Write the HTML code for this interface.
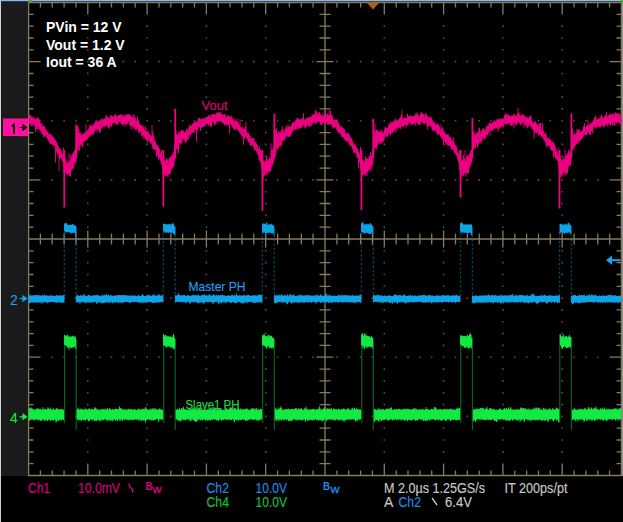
<!DOCTYPE html>
<html><head><meta charset="utf-8"><style>
html,body{margin:0;padding:0;background:#000;width:623px;height:522px;overflow:hidden}
svg{display:block}
text{font-family:"Liberation Sans",sans-serif}
</style></head><body>
<svg width="623" height="522" viewBox="0 0 623 522">
<rect width="623" height="522" fill="#000"/>
<rect x="0" y="0" width="27" height="476" fill="#1a1a1a"/>
<rect x="0" y="0" width="1" height="522" fill="#d2d2d2"/>
<rect x="0" y="0" width="623" height="1" fill="#a0b4cc"/>
<rect x="1" y="1" width="622" height="1" fill="#1a4070"/>
<rect x="622" y="2" width="1" height="474" fill="#9a9a9a"/>
<rect x="29" y="0" width="3" height="2" fill="#30c040"/>
<rect x="621" y="0" width="2" height="3" fill="#30c040"/>
<rect x="28.5" y="2.5" width="593" height="473" fill="none" stroke="#857b5f" stroke-width="1.5"/>
<path d="M40.4 2.5v5M40.4 475.5v-5M52.2 2.5v5M52.2 475.5v-5M64.1 2.5v5M64.1 475.5v-5M75.9 2.5v5M75.9 475.5v-5M87.8 2.5v12M87.8 475.5v-12M99.7 2.5v5M99.7 475.5v-5M111.5 2.5v5M111.5 475.5v-5M123.4 2.5v5M123.4 475.5v-5M135.2 2.5v5M135.2 475.5v-5M147.1 2.5v12M147.1 475.5v-12M159 2.5v5M159 475.5v-5M170.8 2.5v5M170.8 475.5v-5M182.7 2.5v5M182.7 475.5v-5M194.5 2.5v5M194.5 475.5v-5M206.4 2.5v12M206.4 475.5v-12M218.3 2.5v5M218.3 475.5v-5M230.1 2.5v5M230.1 475.5v-5M242 2.5v5M242 475.5v-5M253.8 2.5v5M253.8 475.5v-5M265.7 2.5v12M265.7 475.5v-12M277.6 2.5v5M277.6 475.5v-5M289.4 2.5v5M289.4 475.5v-5M301.3 2.5v5M301.3 475.5v-5M313.1 2.5v5M313.1 475.5v-5M325 2.5v12M325 475.5v-12M336.9 2.5v5M336.9 475.5v-5M348.7 2.5v5M348.7 475.5v-5M360.6 2.5v5M360.6 475.5v-5M372.4 2.5v5M372.4 475.5v-5M384.3 2.5v12M384.3 475.5v-12M396.2 2.5v5M396.2 475.5v-5M408 2.5v5M408 475.5v-5M419.9 2.5v5M419.9 475.5v-5M431.7 2.5v5M431.7 475.5v-5M443.6 2.5v12M443.6 475.5v-12M455.5 2.5v5M455.5 475.5v-5M467.3 2.5v5M467.3 475.5v-5M479.2 2.5v5M479.2 475.5v-5M491 2.5v5M491 475.5v-5M502.9 2.5v12M502.9 475.5v-12M514.8 2.5v5M514.8 475.5v-5M526.6 2.5v5M526.6 475.5v-5M538.5 2.5v5M538.5 475.5v-5M550.3 2.5v5M550.3 475.5v-5M562.2 2.5v12M562.2 475.5v-12M574.1 2.5v5M574.1 475.5v-5M585.9 2.5v5M585.9 475.5v-5M597.8 2.5v5M597.8 475.5v-5M609.6 2.5v5M609.6 475.5v-5M28.5 14.3h5M621.5 14.3h-5M28.5 26.1h5M621.5 26.1h-5M28.5 38h5M621.5 38h-5M28.5 49.8h5M621.5 49.8h-5M28.5 61.6h12M621.5 61.6h-12M28.5 73.5h5M621.5 73.5h-5M28.5 85.3h5M621.5 85.3h-5M28.5 97.1h5M621.5 97.1h-5M28.5 108.9h5M621.5 108.9h-5M28.5 120.8h12M621.5 120.8h-12M28.5 132.6h5M621.5 132.6h-5M28.5 144.4h5M621.5 144.4h-5M28.5 156.2h5M621.5 156.2h-5M28.5 168.1h5M621.5 168.1h-5M28.5 179.9h12M621.5 179.9h-12M28.5 191.7h5M621.5 191.7h-5M28.5 203.5h5M621.5 203.5h-5M28.5 215.3h5M621.5 215.3h-5M28.5 227.2h5M621.5 227.2h-5M28.5 239h12M621.5 239h-12M28.5 250.8h5M621.5 250.8h-5M28.5 262.6h5M621.5 262.6h-5M28.5 274.5h5M621.5 274.5h-5M28.5 286.3h5M621.5 286.3h-5M28.5 298.1h12M621.5 298.1h-12M28.5 309.9h5M621.5 309.9h-5M28.5 321.8h5M621.5 321.8h-5M28.5 333.6h5M621.5 333.6h-5M28.5 345.4h5M621.5 345.4h-5M28.5 357.2h12M621.5 357.2h-12M28.5 369.1h5M621.5 369.1h-5M28.5 380.9h5M621.5 380.9h-5M28.5 392.7h5M621.5 392.7h-5M28.5 404.6h5M621.5 404.6h-5M28.5 416.4h12M621.5 416.4h-12M28.5 428.2h5M621.5 428.2h-5M28.5 440h5M621.5 440h-5M28.5 451.9h5M621.5 451.9h-5M28.5 463.7h5M621.5 463.7h-5M28.5 239H621.5M325 2.5V475.5M40.4 233.5v11M52.2 233.5v11M64.1 233.5v11M75.9 233.5v11M87.8 230.5v17M99.7 233.5v11M111.5 233.5v11M123.4 233.5v11M135.2 233.5v11M147.1 230.5v17M159 233.5v11M170.8 233.5v11M182.7 233.5v11M194.5 233.5v11M206.4 230.5v17M218.3 233.5v11M230.1 233.5v11M242 233.5v11M253.8 233.5v11M265.7 230.5v17M277.6 233.5v11M289.4 233.5v11M301.3 233.5v11M313.1 233.5v11M325 230.5v17M336.9 233.5v11M348.7 233.5v11M360.6 233.5v11M372.4 233.5v11M384.3 230.5v17M396.2 233.5v11M408 233.5v11M419.9 233.5v11M431.7 233.5v11M443.6 230.5v17M455.5 233.5v11M467.3 233.5v11M479.2 233.5v11M491 233.5v11M502.9 230.5v17M514.8 233.5v11M526.6 233.5v11M538.5 233.5v11M550.3 233.5v11M562.2 230.5v17M574.1 233.5v11M585.9 233.5v11M597.8 233.5v11M609.6 233.5v11M319.5 14.3h11M319.5 26.1h11M319.5 38h11M319.5 49.8h11M316.5 61.6h17M319.5 73.5h11M319.5 85.3h11M319.5 97.1h11M319.5 108.9h11M316.5 120.8h17M319.5 132.6h11M319.5 144.4h11M319.5 156.2h11M319.5 168.1h11M316.5 179.9h17M319.5 191.7h11M319.5 203.5h11M319.5 215.3h11M319.5 227.2h11M316.5 239h17M319.5 250.8h11M319.5 262.6h11M319.5 274.5h11M319.5 286.3h11M316.5 298.1h17M319.5 309.9h11M319.5 321.8h11M319.5 333.6h11M319.5 345.4h11M316.5 357.2h17M319.5 369.1h11M319.5 380.9h11M319.5 392.7h11M319.5 404.6h11M316.5 416.4h17M319.5 428.2h11M319.5 440h11M319.5 451.9h11M319.5 463.7h11" stroke="#857b5f" stroke-width="1.3" fill="none"/>
<path d="M87 26.1h1.6M87 38h1.6M87 49.8h1.6M87 61.6h1.6M87 73.5h1.6M87 85.3h1.6M87 97.1h1.6M87 108.9h1.6M87 120.8h1.6M87 132.6h1.6M87 144.4h1.6M87 156.2h1.6M87 168.1h1.6M87 179.9h1.6M87 191.7h1.6M87 203.5h1.6M87 215.3h1.6M87 227.2h1.6M87 239h1.6M87 250.8h1.6M87 262.6h1.6M87 274.5h1.6M87 286.3h1.6M87 298.1h1.6M87 309.9h1.6M87 321.8h1.6M87 333.6h1.6M87 345.4h1.6M87 357.2h1.6M87 369.1h1.6M87 380.9h1.6M87 392.7h1.6M87 404.6h1.6M87 416.4h1.6M87 428.2h1.6M87 440h1.6M87 451.9h1.6M146.3 26.1h1.6M146.3 38h1.6M146.3 49.8h1.6M146.3 61.6h1.6M146.3 73.5h1.6M146.3 85.3h1.6M146.3 97.1h1.6M146.3 108.9h1.6M146.3 120.8h1.6M146.3 132.6h1.6M146.3 144.4h1.6M146.3 156.2h1.6M146.3 168.1h1.6M146.3 179.9h1.6M146.3 191.7h1.6M146.3 203.5h1.6M146.3 215.3h1.6M146.3 227.2h1.6M146.3 239h1.6M146.3 250.8h1.6M146.3 262.6h1.6M146.3 274.5h1.6M146.3 286.3h1.6M146.3 298.1h1.6M146.3 309.9h1.6M146.3 321.8h1.6M146.3 333.6h1.6M146.3 345.4h1.6M146.3 357.2h1.6M146.3 369.1h1.6M146.3 380.9h1.6M146.3 392.7h1.6M146.3 404.6h1.6M146.3 416.4h1.6M146.3 428.2h1.6M146.3 440h1.6M146.3 451.9h1.6M205.6 26.1h1.6M205.6 38h1.6M205.6 49.8h1.6M205.6 61.6h1.6M205.6 73.5h1.6M205.6 85.3h1.6M205.6 97.1h1.6M205.6 108.9h1.6M205.6 120.8h1.6M205.6 132.6h1.6M205.6 144.4h1.6M205.6 156.2h1.6M205.6 168.1h1.6M205.6 179.9h1.6M205.6 191.7h1.6M205.6 203.5h1.6M205.6 215.3h1.6M205.6 227.2h1.6M205.6 239h1.6M205.6 250.8h1.6M205.6 262.6h1.6M205.6 274.5h1.6M205.6 286.3h1.6M205.6 298.1h1.6M205.6 309.9h1.6M205.6 321.8h1.6M205.6 333.6h1.6M205.6 345.4h1.6M205.6 357.2h1.6M205.6 369.1h1.6M205.6 380.9h1.6M205.6 392.7h1.6M205.6 404.6h1.6M205.6 416.4h1.6M205.6 428.2h1.6M205.6 440h1.6M205.6 451.9h1.6M264.9 26.1h1.6M264.9 38h1.6M264.9 49.8h1.6M264.9 61.6h1.6M264.9 73.5h1.6M264.9 85.3h1.6M264.9 97.1h1.6M264.9 108.9h1.6M264.9 120.8h1.6M264.9 132.6h1.6M264.9 144.4h1.6M264.9 156.2h1.6M264.9 168.1h1.6M264.9 179.9h1.6M264.9 191.7h1.6M264.9 203.5h1.6M264.9 215.3h1.6M264.9 227.2h1.6M264.9 239h1.6M264.9 250.8h1.6M264.9 262.6h1.6M264.9 274.5h1.6M264.9 286.3h1.6M264.9 298.1h1.6M264.9 309.9h1.6M264.9 321.8h1.6M264.9 333.6h1.6M264.9 345.4h1.6M264.9 357.2h1.6M264.9 369.1h1.6M264.9 380.9h1.6M264.9 392.7h1.6M264.9 404.6h1.6M264.9 416.4h1.6M264.9 428.2h1.6M264.9 440h1.6M264.9 451.9h1.6M383.5 26.1h1.6M383.5 38h1.6M383.5 49.8h1.6M383.5 61.6h1.6M383.5 73.5h1.6M383.5 85.3h1.6M383.5 97.1h1.6M383.5 108.9h1.6M383.5 120.8h1.6M383.5 132.6h1.6M383.5 144.4h1.6M383.5 156.2h1.6M383.5 168.1h1.6M383.5 179.9h1.6M383.5 191.7h1.6M383.5 203.5h1.6M383.5 215.3h1.6M383.5 227.2h1.6M383.5 239h1.6M383.5 250.8h1.6M383.5 262.6h1.6M383.5 274.5h1.6M383.5 286.3h1.6M383.5 298.1h1.6M383.5 309.9h1.6M383.5 321.8h1.6M383.5 333.6h1.6M383.5 345.4h1.6M383.5 357.2h1.6M383.5 369.1h1.6M383.5 380.9h1.6M383.5 392.7h1.6M383.5 404.6h1.6M383.5 416.4h1.6M383.5 428.2h1.6M383.5 440h1.6M383.5 451.9h1.6M442.8 26.1h1.6M442.8 38h1.6M442.8 49.8h1.6M442.8 61.6h1.6M442.8 73.5h1.6M442.8 85.3h1.6M442.8 97.1h1.6M442.8 108.9h1.6M442.8 120.8h1.6M442.8 132.6h1.6M442.8 144.4h1.6M442.8 156.2h1.6M442.8 168.1h1.6M442.8 179.9h1.6M442.8 191.7h1.6M442.8 203.5h1.6M442.8 215.3h1.6M442.8 227.2h1.6M442.8 239h1.6M442.8 250.8h1.6M442.8 262.6h1.6M442.8 274.5h1.6M442.8 286.3h1.6M442.8 298.1h1.6M442.8 309.9h1.6M442.8 321.8h1.6M442.8 333.6h1.6M442.8 345.4h1.6M442.8 357.2h1.6M442.8 369.1h1.6M442.8 380.9h1.6M442.8 392.7h1.6M442.8 404.6h1.6M442.8 416.4h1.6M442.8 428.2h1.6M442.8 440h1.6M442.8 451.9h1.6M502.1 26.1h1.6M502.1 38h1.6M502.1 49.8h1.6M502.1 61.6h1.6M502.1 73.5h1.6M502.1 85.3h1.6M502.1 97.1h1.6M502.1 108.9h1.6M502.1 120.8h1.6M502.1 132.6h1.6M502.1 144.4h1.6M502.1 156.2h1.6M502.1 168.1h1.6M502.1 179.9h1.6M502.1 191.7h1.6M502.1 203.5h1.6M502.1 215.3h1.6M502.1 227.2h1.6M502.1 239h1.6M502.1 250.8h1.6M502.1 262.6h1.6M502.1 274.5h1.6M502.1 286.3h1.6M502.1 298.1h1.6M502.1 309.9h1.6M502.1 321.8h1.6M502.1 333.6h1.6M502.1 345.4h1.6M502.1 357.2h1.6M502.1 369.1h1.6M502.1 380.9h1.6M502.1 392.7h1.6M502.1 404.6h1.6M502.1 416.4h1.6M502.1 428.2h1.6M502.1 440h1.6M502.1 451.9h1.6M561.4 26.1h1.6M561.4 38h1.6M561.4 49.8h1.6M561.4 61.6h1.6M561.4 73.5h1.6M561.4 85.3h1.6M561.4 97.1h1.6M561.4 108.9h1.6M561.4 120.8h1.6M561.4 132.6h1.6M561.4 144.4h1.6M561.4 156.2h1.6M561.4 168.1h1.6M561.4 179.9h1.6M561.4 191.7h1.6M561.4 203.5h1.6M561.4 215.3h1.6M561.4 227.2h1.6M561.4 239h1.6M561.4 250.8h1.6M561.4 262.6h1.6M561.4 274.5h1.6M561.4 286.3h1.6M561.4 298.1h1.6M561.4 309.9h1.6M561.4 321.8h1.6M561.4 333.6h1.6M561.4 345.4h1.6M561.4 357.2h1.6M561.4 369.1h1.6M561.4 380.9h1.6M561.4 392.7h1.6M561.4 404.6h1.6M561.4 416.4h1.6M561.4 428.2h1.6M561.4 440h1.6M561.4 451.9h1.6M51.4 61.6h1.6M63.3 61.6h1.6M75.1 61.6h1.6M87 61.6h1.6M98.9 61.6h1.6M110.7 61.6h1.6M122.6 61.6h1.6M134.4 61.6h1.6M146.3 61.6h1.6M158.2 61.6h1.6M170 61.6h1.6M181.9 61.6h1.6M193.7 61.6h1.6M205.6 61.6h1.6M217.5 61.6h1.6M229.3 61.6h1.6M241.2 61.6h1.6M253 61.6h1.6M264.9 61.6h1.6M276.8 61.6h1.6M288.6 61.6h1.6M300.5 61.6h1.6M312.3 61.6h1.6M324.2 61.6h1.6M336.1 61.6h1.6M347.9 61.6h1.6M359.8 61.6h1.6M371.6 61.6h1.6M383.5 61.6h1.6M395.4 61.6h1.6M407.2 61.6h1.6M419.1 61.6h1.6M430.9 61.6h1.6M442.8 61.6h1.6M454.7 61.6h1.6M466.5 61.6h1.6M478.4 61.6h1.6M490.2 61.6h1.6M502.1 61.6h1.6M514 61.6h1.6M525.8 61.6h1.6M537.7 61.6h1.6M549.5 61.6h1.6M561.4 61.6h1.6M573.3 61.6h1.6M585.1 61.6h1.6M597 61.6h1.6M51.4 120.8h1.6M63.3 120.8h1.6M75.1 120.8h1.6M87 120.8h1.6M98.9 120.8h1.6M110.7 120.8h1.6M122.6 120.8h1.6M134.4 120.8h1.6M146.3 120.8h1.6M158.2 120.8h1.6M170 120.8h1.6M181.9 120.8h1.6M193.7 120.8h1.6M205.6 120.8h1.6M217.5 120.8h1.6M229.3 120.8h1.6M241.2 120.8h1.6M253 120.8h1.6M264.9 120.8h1.6M276.8 120.8h1.6M288.6 120.8h1.6M300.5 120.8h1.6M312.3 120.8h1.6M324.2 120.8h1.6M336.1 120.8h1.6M347.9 120.8h1.6M359.8 120.8h1.6M371.6 120.8h1.6M383.5 120.8h1.6M395.4 120.8h1.6M407.2 120.8h1.6M419.1 120.8h1.6M430.9 120.8h1.6M442.8 120.8h1.6M454.7 120.8h1.6M466.5 120.8h1.6M478.4 120.8h1.6M490.2 120.8h1.6M502.1 120.8h1.6M514 120.8h1.6M525.8 120.8h1.6M537.7 120.8h1.6M549.5 120.8h1.6M561.4 120.8h1.6M573.3 120.8h1.6M585.1 120.8h1.6M597 120.8h1.6M51.4 179.9h1.6M63.3 179.9h1.6M75.1 179.9h1.6M87 179.9h1.6M98.9 179.9h1.6M110.7 179.9h1.6M122.6 179.9h1.6M134.4 179.9h1.6M146.3 179.9h1.6M158.2 179.9h1.6M170 179.9h1.6M181.9 179.9h1.6M193.7 179.9h1.6M205.6 179.9h1.6M217.5 179.9h1.6M229.3 179.9h1.6M241.2 179.9h1.6M253 179.9h1.6M264.9 179.9h1.6M276.8 179.9h1.6M288.6 179.9h1.6M300.5 179.9h1.6M312.3 179.9h1.6M324.2 179.9h1.6M336.1 179.9h1.6M347.9 179.9h1.6M359.8 179.9h1.6M371.6 179.9h1.6M383.5 179.9h1.6M395.4 179.9h1.6M407.2 179.9h1.6M419.1 179.9h1.6M430.9 179.9h1.6M442.8 179.9h1.6M454.7 179.9h1.6M466.5 179.9h1.6M478.4 179.9h1.6M490.2 179.9h1.6M502.1 179.9h1.6M514 179.9h1.6M525.8 179.9h1.6M537.7 179.9h1.6M549.5 179.9h1.6M561.4 179.9h1.6M573.3 179.9h1.6M585.1 179.9h1.6M597 179.9h1.6M51.4 298.1h1.6M63.3 298.1h1.6M75.1 298.1h1.6M87 298.1h1.6M98.9 298.1h1.6M110.7 298.1h1.6M122.6 298.1h1.6M134.4 298.1h1.6M146.3 298.1h1.6M158.2 298.1h1.6M170 298.1h1.6M181.9 298.1h1.6M193.7 298.1h1.6M205.6 298.1h1.6M217.5 298.1h1.6M229.3 298.1h1.6M241.2 298.1h1.6M253 298.1h1.6M264.9 298.1h1.6M276.8 298.1h1.6M288.6 298.1h1.6M300.5 298.1h1.6M312.3 298.1h1.6M324.2 298.1h1.6M336.1 298.1h1.6M347.9 298.1h1.6M359.8 298.1h1.6M371.6 298.1h1.6M383.5 298.1h1.6M395.4 298.1h1.6M407.2 298.1h1.6M419.1 298.1h1.6M430.9 298.1h1.6M442.8 298.1h1.6M454.7 298.1h1.6M466.5 298.1h1.6M478.4 298.1h1.6M490.2 298.1h1.6M502.1 298.1h1.6M514 298.1h1.6M525.8 298.1h1.6M537.7 298.1h1.6M549.5 298.1h1.6M561.4 298.1h1.6M573.3 298.1h1.6M585.1 298.1h1.6M597 298.1h1.6M51.4 357.2h1.6M63.3 357.2h1.6M75.1 357.2h1.6M87 357.2h1.6M98.9 357.2h1.6M110.7 357.2h1.6M122.6 357.2h1.6M134.4 357.2h1.6M146.3 357.2h1.6M158.2 357.2h1.6M170 357.2h1.6M181.9 357.2h1.6M193.7 357.2h1.6M205.6 357.2h1.6M217.5 357.2h1.6M229.3 357.2h1.6M241.2 357.2h1.6M253 357.2h1.6M264.9 357.2h1.6M276.8 357.2h1.6M288.6 357.2h1.6M300.5 357.2h1.6M312.3 357.2h1.6M324.2 357.2h1.6M336.1 357.2h1.6M347.9 357.2h1.6M359.8 357.2h1.6M371.6 357.2h1.6M383.5 357.2h1.6M395.4 357.2h1.6M407.2 357.2h1.6M419.1 357.2h1.6M430.9 357.2h1.6M442.8 357.2h1.6M454.7 357.2h1.6M466.5 357.2h1.6M478.4 357.2h1.6M490.2 357.2h1.6M502.1 357.2h1.6M514 357.2h1.6M525.8 357.2h1.6M537.7 357.2h1.6M549.5 357.2h1.6M561.4 357.2h1.6M573.3 357.2h1.6M585.1 357.2h1.6M597 357.2h1.6M51.4 416.4h1.6M63.3 416.4h1.6M75.1 416.4h1.6M87 416.4h1.6M98.9 416.4h1.6M110.7 416.4h1.6M122.6 416.4h1.6M134.4 416.4h1.6M146.3 416.4h1.6M158.2 416.4h1.6M170 416.4h1.6M181.9 416.4h1.6M193.7 416.4h1.6M205.6 416.4h1.6M217.5 416.4h1.6M229.3 416.4h1.6M241.2 416.4h1.6M253 416.4h1.6M264.9 416.4h1.6M276.8 416.4h1.6M288.6 416.4h1.6M300.5 416.4h1.6M312.3 416.4h1.6M324.2 416.4h1.6M336.1 416.4h1.6M347.9 416.4h1.6M359.8 416.4h1.6M371.6 416.4h1.6M383.5 416.4h1.6M395.4 416.4h1.6M407.2 416.4h1.6M419.1 416.4h1.6M430.9 416.4h1.6M442.8 416.4h1.6M454.7 416.4h1.6M466.5 416.4h1.6M478.4 416.4h1.6M490.2 416.4h1.6M502.1 416.4h1.6M514 416.4h1.6M525.8 416.4h1.6M537.7 416.4h1.6M549.5 416.4h1.6M561.4 416.4h1.6M573.3 416.4h1.6M585.1 416.4h1.6M597 416.4h1.6" stroke="#857b5f" stroke-width="1.6" fill="none" opacity="0.65"/>
<path d="M29 116V122.1M29.5 115.5V123.8M30 115V123.2M30.5 114.9V124.1M31 116.2V124.8M31.5 117V126.1M32 116.8V126.9M32.5 117.1V125.3M33 117.2V124.6M33.5 117.8V124.3M34 117.7V125.1M34.5 118.7V125.3M35 117.8V126M35.5 119.4V131.9M36 118.9V127.8M36.5 119.1V129.1M37 118.5V130.1M37.5 117.9V127M38 117.1V129.3M38.5 118.6V129.2M39 118.6V128.1M39.5 121.3V129.2M40 122.9V130M40.5 124.1V130.7M41 123V131.8M41.5 123.2V133.9M42 123.6V134.4M42.5 126.3V132.7M43 125.7V135.1M43.5 126.2V137.3M44 125.6V137.4M44.5 126.9V136.1M45 128.4V135.1M45.5 128.8V135.2M46 129.8V136.4M46.5 130.5V136.7M47 131V138.5M47.5 131.7V137.9M48 132.8V140.4M48.5 133.8V140.3M49 133.9V141.2M49.5 134.3V143.1M50 133.5V142.3M50.5 134.4V143.7M51 134.1V144M51.5 135.3V144.6M52 137.2V143.7M52.5 136.4V144.4M53 136.6V145.6M53.5 137.2V144.7M54 138.8V145.7M54.5 139.6V146.1M55 139.8V146.4M55.5 139.7V162.3M56 141.6V148.9M56.5 142.3V151.5M57 143.2V152.6M57.5 144.6V153.8M58 145.9V155.7M58.5 146.4V154M59 148.5V171M59.5 148.4V159.1M60 148.9V158.2M60.5 149.3V158M61 151.3V157.6M61.5 150.8V159.1M62 153.6V160.4M62.5 154.5V161.6M63 154.6V162.2M63.5 147.5V165.5M64 153.5V171.8M64.5 155.3V170.1M65 160.2V171.2M65.5 158.5V172.1M66 160.1V173.1M66.5 163V173.9M67 161.6V174.9M67.5 162.9V174.3M68 163.1V174.8M68.5 161.7V174.1M69 153.2V173.4M69.5 161.7V176.5M70 160.6V173.7M70.5 158.9V176.5M71 154.8V170.7M71.5 155.6V170.6M72 156.7V168.5M72.5 154.2V168.6M73 152.8V170M73.5 152.2V168M74 152.7V164.6M74.5 150.6V163.9M75 150.7V162.6M75.5 148.6V161.9M76 147.7V162.6M76.5 130.9V151.6M77 126.4V151.6M77.5 125.6V150.8M78 125.8V150.1M78.5 128.6V145.9M79 132.8V149.1M79.5 132.2V150.9M80 132.5V145.7M80.5 133.5V144.6M81 132.7V145.7M81.5 134.7V144.4M82 134.3V147.4M82.5 134.4V147.1M83 134.1V145.1M83.5 132.8V142.1M84 133.8V141.4M84.5 133.5V141.2M85 132.8V141.1M85.5 132.7V141M86 124.2V140.9M86.5 131.3V139.7M87 132.1V139.1M87.5 130.4V139.4M88 129.5V137.5M88.5 129.5V137.3M89 128.2V135.9M89.5 126.5V136.8M90 124.5V134.6M90.5 125.4V134.4M91 125.6V136.2M91.5 126.4V134.3M92 124.5V133.6M92.5 125.7V133.5M93 124.4V135.1M93.5 125.4V134.9M94 124.3V131.3M94.5 123.6V132.1M95 122.7V130.7M95.5 121.7V129.4M96 120V128.6M96.5 121.2V129.8M97 122.3V131.7M97.5 120.4V129.1M98 122.8V130.4M98.5 121.7V128.9M99 121.8V129.9M99.5 121.8V132.9M100 121V132.5M100.5 120.4V131.1M101 120.6V128.5M101.5 118.5V127.9M102 119.5V128.1M102.5 119.8V126.5M103 119.1V126.2M103.5 119.4V127M104 118.2V126.9M104.5 118.6V126.8M105 119.3V126M105.5 117.8V125.7M106 115.8V125.4M106.5 115.3V125.2M107 116.5V124.7M107.5 117.4V126.4M108 118.4V127.1M108.5 117.1V127.5M109 118V127.8M109.5 118.4V128.9M110 117.3V125.9M110.5 115.6V124.5M111 114.6V125.2M111.5 115.6V127M112 116.7V123.6M112.5 116.8V124.5M113 116.5V123M113.5 116.5V122.8M114 115.2V122.9M114.5 116V123M115 115V122.7M115.5 113.9V124.5M116 115.9V124.6M116.5 116.3V123.1M117 115.4V122.9M117.5 116.9V124.9M118 116.3V124M118.5 115V121.9M119 115.9V122.4M119.5 115V121.5M120 114.9V121.3M120.5 114.6V122.4M121 114.6V122.7M121.5 114.8V123.9M122 114.6V122.9M122.5 117V125.4M123 115.4V125.4M123.5 115.5V123.7M124 116.5V124.6M124.5 114.8V122.3M125 116.3V126.7M125.5 116.5V124M126 114.7V124.7M126.5 114.8V124M127 114.8V124.7M127.5 113.9V123.7M128 114.8V120.8M128.5 114V121.2M129 115.7V122.7M129.5 114.5V124.7M130 115.5V124.7M130.5 115.1V125.8M131 116.8V129.6M131.5 117.1V126.5M132 116.8V126.6M132.5 116.2V125.7M133 114.6V128.9M133.5 118.9V127.7M134 114.3V125.4M134.5 117.4V127.2M135 116.8V129.2M135.5 118.3V129.6M136 121.3V130.6M136.5 121.3V129.7M137 120.4V128.1M137.5 116.4V128.7M138 120.5V130.1M138.5 120.4V131.5M139 121.5V132.9M139.5 123.4V133.5M140 124.3V131.5M140.5 125.2V131.9M141 125.7V132.3M141.5 125.4V135.7M142 124.7V133.5M142.5 125.5V136.3M143 126.4V139.4M143.5 127.5V135.1M144 127.5V136.3M144.5 130.4V137.3M145 126V138.4M145.5 130.6V139M146 128V140.4M146.5 131.7V138.9M147 131.7V140.6M147.5 131.4V142.6M148 131.4V141M148.5 131.8V139.1M149 134V140.3M149.5 134.1V141.7M150 135.1V141.8M150.5 135.8V143.7M151 135.8V143.4M151.5 136.2V143.2M152 125V144.3M152.5 134.3V147.1M153 131.2V148.7M153.5 135.3V149.8M154 138.1V148.1M154.5 140.2V149.2M155 141.2V148.1M155.5 141.6V149.7M156 144.2V151.7M156.5 144.9V156.9M157 144.8V154.8M157.5 145.4V155.4M158 145.6V152.8M158.5 147.5V159.7M159 147.7V156.8M159.5 149.2V158.3M160 152.3V159.5M160.5 153.3V160.7M161 152.1V161.6M161.5 149.8V164.6M162 157.1V164.4M162.5 155.5V168.2M163 155.5V173.6M163.5 155.9V172.6M164 157.2V174.8M164.5 161.8V174.7M165 159.9V176.5M165.5 160.4V176.3M166 162.6V176.2M166.5 158.1V173.5M167 160.2V176.2M167.5 159.5V175.5M168 162.2V178.1M168.5 160.4V174.6M169 159.6V174.5M169.5 158V174M170 157.1V174.1M170.5 157.8V172.7M171 156.5V170.1M171.5 155.8V170M172 156.3V168.5M172.5 155.4V167.1M173 151.5V168M173.5 153.2V167M174 151.9V165M174.5 145.3V161M175 144.1V159.4M175.5 128.4V148.7M176 130.2V147.7M176.5 133.7V148.8M177 135.5V149.2M177.5 135.6V149.6M178 134.6V153.3M178.5 132.8V153.2M179 131.4V149M179.5 133.4V143.4M180 131.1V143M180.5 132.2V143.6M181 130.7V144.1M181.5 130.2V143.4M182 132.1V142.1M182.5 130.4V139.4M183 129.7V138.7M183.5 131.2V138.7M184 131.3V140.5M184.5 132.3V139.5M185 132.5V141M185.5 132.4V143.3M186 130.9V142.2M186.5 129.3V141.5M187 128.4V139.5M187.5 131.1V139.5M188 129.7V139.8M188.5 129.5V138.4M189 127.5V137.5M189.5 125.2V134.6M190 125.6V135.4M190.5 125.9V135.3M191 125.5V134.3M191.5 125.4V133.4M192 126V133.5M192.5 124V132.4M193 123V132.1M193.5 123.3V132.7M194 122.1V133.1M194.5 123V130.3M195 121.1V129.2M195.5 121.7V130.3M196 122.4V130.2M196.5 123V141.8M197 121.9V132.8M197.5 120.8V129.7M198 119.3V128M198.5 118.1V126.2M199 118.1V127.3M199.5 118.3V127M200 119.2V126.6M200.5 119.2V130.9M201 118.8V128.1M201.5 120V127.9M202 118.4V127M202.5 118.9V127.3M203 118.9V127M203.5 118V126M204 119V126.2M204.5 119V125.6M205 119.2V126.7M205.5 117.6V124.5M206 116.6V123.1M206.5 117V123.6M207 117V124.1M207.5 117.2V123.2M208 116.8V124.7M208.5 115.6V125.6M209 114.8V123.6M209.5 115.4V124.2M210 117.5V126.2M210.5 116.7V126.2M211 114.9V127.2M211.5 115V126.5M212 114.1V122.2M212.5 115.4V121.4M213 113.9V121.6M213.5 114.2V121.8M214 114V122.3M214.5 114.1V125.4M215 116.5V124.6M215.5 115V123.7M216 113.4V122.7M216.5 113.4V121M217 112.9V123.7M217.5 112V121.7M218 112.6V120.7M218.5 113.4V120.5M219 113.1V120.7M219.5 112.1V121.1M220 114.2V121.3M220.5 113.4V120.9M221 111.7V122M221.5 113.9V122.1M222 114.4V122.1M222.5 114.9V122M223 115.4V124.3M223.5 115.2V122.6M224 114V123.9M224.5 114.1V125.5M225 114V125.4M225.5 116.7V124.2M226 116.7V123.9M226.5 116.9V124.7M227 116.9V125.3M227.5 115.3V124.3M228 115V125.6M228.5 116.6V125.2M229 116.8V125.1M229.5 116.2V133.5M230 117.3V124.7M230.5 117.7V123.8M231 115.7V123.6M231.5 116.9V124.8M232 117.2V126M232.5 119V127.5M233 119.2V128.1M233.5 120.6V127.3M234 118V129.1M234.5 120.4V130M235 121.7V130M235.5 120.7V128.5M236 121.5V129.4M236.5 120.4V127.7M237 118.6V129.7M237.5 122.5V129.9M238 122.6V129.5M238.5 122.5V130.7M239 124V131.6M239.5 125.2V132.1M240 119.2V133.3M240.5 127V133.9M241 127.7V134.1M241.5 128V135.1M242 127V136.2M242.5 126.8V136.3M243 128.6V139.2M243.5 129.3V144.7M244 129.3V139.2M244.5 128.7V138.7M245 127.7V136.8M245.5 126.6V136.2M246 122V136.3M246.5 131.5V138.1M247 132.4V139M247.5 133.2V139.7M248 132.5V141.3M248.5 133V142.2M249 134.4V142.2M249.5 135.2V142M250 135.9V144.9M250.5 138.8V145.5M251 136V145.3M251.5 139.2V145.9M252 138.5V145M252.5 138.2V144.4M253 138.9V145.4M253.5 138.3V146.5M254 137.9V148.3M254.5 141.9V149.8M255 141.9V151M255.5 142.3V149.9M256 140.9V150M256.5 144V151M257 145.3V152.5M257.5 145V154.4M258 147.7V154.6M258.5 148.2V156.6M259 149.4V159.9M259.5 146.5V160.3M260 152.5V162.4M260.5 149.5V161.3M261 154.2V163.5M261.5 150.5V166.5M262 154.1V170.2M262.5 160.3V175.1M263 160.7V182.2M263.5 161.4V176.9M264 161.3V175M264.5 161.5V175.3M265 162.8V173.1M265.5 161.1V174.7M266 160.1V175.3M266.5 155.8V172.1M267 159.7V173.2M267.5 160.4V173.5M268 158.5V174.1M268.5 160.5V171.3M269 159.4V169.9M269.5 159V171.7M270 156.4V172.4M270.5 157.5V171.1M271 143.1V168.5M271.5 150.4V166M272 148.2V166.7M272.5 149.8V164.2M273 151.3V164.5M273.5 149.1V161.8M274 146.2V160.3M274.5 126V152.6M275 131.1V155.1M275.5 129.5V152.7M276 131.6V155.7M276.5 128.2V147.6M277 134.7V147.3M277.5 133.6V149.8M278 135.6V147.8M278.5 131.3V148.9M279 131.1V145.8M279.5 133.3V146.4M280 132.5V144.9M280.5 131.9V145.5M281 133V145.3M281.5 129.6V146.2M282 129.9V141.1M282.5 126.4V141.3M283 131.9V139.5M283.5 132.2V140.5M284 129.9V140.7M284.5 129.6V139.3M285 130.3V140.6M285.5 128.4V136.3M286 125.5V137.1M286.5 126.7V135.9M287 126.8V134.8M287.5 128.7V136.4M288 124.1V136.1M288.5 126.8V137M289 127.8V136.6M289.5 126.1V136.2M290 128V136.9M290.5 127V135.8M291 125.4V134.5M291.5 125.6V133M292 124.3V132.4M292.5 122.5V130.8M293 122.9V131.7M293.5 121.9V129.8M294 122.9V130.1M294.5 123V129.2M295 120.8V128M295.5 121.3V129.5M296 120V129.8M296.5 119.6V129.1M297 117.9V129.2M297.5 118V126.8M298 118V126M298.5 118.9V129.3M299 120.1V127.5M299.5 120.3V128.8M300 119.7V127.2M300.5 119.1V128.1M301 119.4V126.9M301.5 119V127.7M302 119.9V127.5M302.5 118.1V125.8M303 117.5V125.5M303.5 113.1V125.1M304 118.9V125.7M304.5 119.7V126.6M305 121V128.5M305.5 119.3V128.4M306 119.4V125.9M306.5 118.2V126.6M307 117.4V126.1M307.5 117.8V125.1M308 119V126M308.5 117.8V124.7M309 117.7V126.6M309.5 117.1V127M310 116.2V124.2M310.5 116.8V123.5M311 117.6V126.4M311.5 117.2V126M312 114.5V124.5M312.5 114.6V123.7M313 115V123.5M313.5 115.4V123.1M314 114.6V122.6M314.5 113.5V121.1M315 113.4V123.2M315.5 109.5V124M316 113.6V122.6M316.5 111.3V122.1M317 114.2V123.3M317.5 114.7V121.9M318 113.1V120.1M318.5 112.7V120.3M319 111.7V121.2M319.5 112.1V120.9M320 115.5V123.7M320.5 113.9V124.7M321 115V123.6M321.5 115.7V125.3M322 116V123.4M322.5 115.5V124M323 112.9V122.8M323.5 115.8V122.3M324 116.5V122.7M324.5 116.4V124M325 115.4V124.5M325.5 109.2V124M326 114.5V122.6M326.5 114.7V122.1M327 115.9V123.2M327.5 113.6V124.4M328 114.5V124.5M328.5 115.6V125M329 110.6V122.6M329.5 115.3V124.1M330 114.5V124.5M330.5 110.7V124.6M331 113.4V125.1M331.5 115.5V124M332 115.1V126.5M332.5 116.7V126.8M333 119V128.9M333.5 119.3V127.3M334 120V127.9M334.5 120.4V126.8M335 120.2V127M335.5 119.6V127.5M336 120.1V128.4M336.5 119.3V129.8M337 122.2V129.4M337.5 121V131.3M338 122V132.1M338.5 122.5V133M339 124.1V131.7M339.5 125.3V133.7M340 126V132.6M340.5 127.5V133.4M341 128.1V134.9M341.5 126.6V136.7M342 126.6V137M342.5 127.3V137.1M343 129.6V137.9M343.5 128.2V137.1M344 129.4V136.8M344.5 129.5V139M345 132.4V139.3M345.5 133.5V140.7M346 132.8V141.5M346.5 134.3V141.6M347 133.2V141.5M347.5 133.9V140.4M348 133.9V141.7M348.5 132.9V141M349 134.8V144M349.5 135.5V144.8M350 136.2V145.8M350.5 138.4V145.2M351 137.9V145.9M351.5 138.3V146.2M352 139.6V146.7M352.5 142.2V149M353 140.7V148.5M353.5 144.2V152.1M354 144.2V153.6M354.5 143.8V153.1M355 144.1V152.8M355.5 146V152.5M356 146.5V152.7M356.5 147.2V155M357 148.2V158M357.5 148.9V158M358 150.3V156.9M358.5 151.9V168.3M359 153V159.2M359.5 154V162.2M360 153.1V163M360.5 146.8V168.9M361 150.4V170.2M361.5 157.6V175.4M362 159.4V175.3M362.5 160V175M363 162.9V175.2M363.5 161V173.8M364 162.2V175M364.5 163V174.4M365 159.3V175.9M365.5 156.3V174M366 157.6V175.4M366.5 158.6V173M367 160.9V176.3M367.5 158.6V172.2M368 158.4V171.7M368.5 158.4V169.7M369 156V170.7M369.5 156V170.6M370 155.9V168.7M370.5 152.1V168.8M371 155.7V171.1M371.5 155.8V166M372 153.4V167.9M372.5 151.5V163.2M373 148.6V164.9M373.5 133.4V152.6M374 131.9V151.8M374.5 130.8V147.9M375 123.5V147.1M375.5 133.3V147.8M376 130.3V148.3M376.5 129.6V149.2M377 132.3V147.2M377.5 130.3V145M378 129.9V143.1M378.5 131.7V143.7M379 132.6V141.9M379.5 131.3V141.3M380 130.4V144.1M380.5 132.9V144.2M381 131.5V143.2M381.5 131.1V143.5M382 129.1V141.1M382.5 131.7V142.2M383 134V142.1M383.5 133.3V140.7M384 131.9V141M384.5 129.5V138M385 128.4V136.7M385.5 126.8V135.3M386 128V135.6M386.5 127.9V136.5M387 128V137.1M387.5 127.8V136.8M388 126.7V135.4M388.5 126.1V134M389 122.9V133.2M389.5 124.1V132.7M390 124.3V133.6M390.5 123.5V135.4M391 121.8V132.5M391.5 122.3V133.5M392 124.6V133M392.5 122.2V132.8M393 121.6V131.7M393.5 120.9V131.3M394 122.8V132M394.5 120.8V130.5M395 120.1V130.7M395.5 118.4V128.3M396 120.7V132.9M396.5 120.8V128.9M397 122.1V129.5M397.5 121V127.7M398 120.1V128.1M398.5 119.5V126.9M399 117.7V128.1M399.5 118.9V127.9M400 120.8V127M400.5 117.1V129.1M401 115.4V127.5M401.5 115V125.8M402 110.1V124.8M402.5 117.8V126M403 118.8V126.6M403.5 118.4V127.1M404 118.6V125.4M404.5 117.7V125M405 117.9V124.4M405.5 118V124.7M406 118V127.6M406.5 118V125.3M407 117.3V125.3M407.5 113.5V125.1M408 115.6V125.2M408.5 116.8V123.3M409 115.7V122.6M409.5 116V122.5M410 115.7V122.4M410.5 116.4V122.6M411 115.2V124.7M411.5 116.6V124.8M412 115.9V124.1M412.5 116.8V124.2M413 116.1V123.8M413.5 115.7V124.4M414 115.9V123.7M414.5 115.9V123.2M415 115.9V126M415.5 113.6V124.3M416 114.8V123.2M416.5 114.1V121M417 112.3V123M417.5 114.6V123M418 114.5V124.6M418.5 115.7V124.4M419 114.7V125.2M419.5 116.9V125.3M420 116.1V124.3M420.5 113.7V123.5M421 113.2V122.3M421.5 112.2V121.8M422 112.7V122.1M422.5 113.9V122.4M423 116.1V122.4M423.5 113.8V123.2M424 115.7V124M424.5 116.9V124.3M425 114.2V123.5M425.5 113.8V122.9M426 113.1V121.9M426.5 114.7V123.2M427 115.3V125.2M427.5 115.7V129.3M428 116.7V126.8M428.5 117.5V125.3M429 118V126.4M429.5 117.4V124.6M430 116.7V124.3M430.5 116.9V126.3M431 116.9V127.1M431.5 118.2V126.2M432 119.1V129.3M432.5 121.1V130.5M433 122.1V130.2M433.5 122.2V131M434 121.4V131.3M434.5 123.4V130.2M435 122.9V130.1M435.5 123.8V130.7M436 124.5V130.9M436.5 125.8V132.6M437 123.7V132.3M437.5 124V135M438 125V135.2M438.5 124.6V132.8M439 126V134.1M439.5 126.2V134.1M440 128.3V135M440.5 129.5V136.3M441 124.3V137.7M441.5 131.2V138.4M442 129V138.5M442.5 127.7V139.2M443 127.4V140M443.5 130.8V143.6M444 132.4V141.1M444.5 132.7V141.3M445 133.7V141.8M445.5 133.4V143.5M446 134.8V145.7M446.5 134.7V143.1M447 134.8V143.5M447.5 134.4V145.2M448 133.7V144.6M448.5 135.3V145.8M449 137.8V145.3M449.5 136.6V146M450 137.5V146M450.5 136.9V146M451 138.5V149.6M451.5 140.2V148.3M452 139.7V149.1M452.5 141.6V149.8M453 142.6V150M453.5 137.3V149.7M454 141.7V152.1M454.5 143.6V153.4M455 145.1V153.5M455.5 145.9V153M456 145V155M456.5 147.2V155.4M457 148.3V156.9M457.5 151.9V158.7M458 154.1V160.7M458.5 153.7V161.7M459 153.3V163.9M459.5 150.5V169.9M460 156.2V169.8M460.5 159.1V172.2M461 158.6V174.6M461.5 160.9V175.4M462 160.9V177.6M462.5 159.6V174.8M463 159.9V174M463.5 155.3V176.1M464 159.2V174.4M464.5 158.5V173M465 149.9V174M465.5 161.5V173.5M466 161V176.9M466.5 157.8V172.2M467 154.6V172.4M467.5 155.5V173.8M468 157.3V171.9M468.5 155.7V173.5M469 155.5V169.7M469.5 154.3V167.8M470 153.1V164.7M470.5 151V165.2M471 150.9V166.7M471.5 150.5V162.2M472 149.3V161.1M472.5 132.6V152.8M473 132.7V148.9M473.5 131.2V150M474 132.2V148.5M474.5 134.5V147.1M475 135.2V148.8M475.5 134.5V148M476 133.3V144.5M476.5 132.8V143.2M477 133.3V143.8M477.5 132.4V147.9M478 134.2V144.9M478.5 131.4V144.7M479 127.3V143M479.5 128V142.6M480 131V141.2M480.5 133.1V141.8M481 132.5V143.8M481.5 130.2V141.5M482 131V139.7M482.5 129V138.3M483 129.5V137.9M483.5 128.1V137.1M484 129.6V139.6M484.5 130.2V139.4M485 130.4V139.3M485.5 129.2V137.1M486 127.1V135.5M486.5 127V134.6M487 125.2V134.5M487.5 126V134.9M488 126.1V134M488.5 125.2V132.7M489 123.2V131.8M489.5 122.9V130.4M490 122.6V136.1M490.5 123.7V130.3M491 123.8V130.9M491.5 122.6V130.3M492 123.8V130.9M492.5 122.9V130.5M493 121.9V130.5M493.5 121.7V129M494 120.6V127.6M494.5 120.6V128.9M495 121.4V127.9M495.5 122.1V128.6M496 119.9V127.8M496.5 120.8V128.2M497 119.5V128.3M497.5 118.5V126.8M498 119.5V131.5M498.5 119.7V130M499 119.6V126.7M499.5 118.7V127.9M500 119.7V128.7M500.5 119.8V127.7M501 118.4V125.9M501.5 118.5V125.3M502 119.3V126.2M502.5 119.1V127.4M503 118.4V127.6M503.5 119.1V126.7M504 117.3V124.2M504.5 115.5V124.2M505 114.7V123.1M505.5 114.3V124.5M506 112.9V123.4M506.5 114.6V123.1M507 114.9V124.7M507.5 116.7V123.9M508 114.3V122.8M508.5 114.6V123.6M509 115.9V123.5M509.5 115.9V123M510 116.1V125.5M510.5 116.9V124.6M511 114.9V125.1M511.5 116.5V125.9M512 115.8V125.2M512.5 115.7V124.2M513 116.2V125.9M513.5 114.1V121.8M514 114.7V128.6M514.5 115.5V122.6M515 114.2V123.1M515.5 116.1V123.8M516 116.2V125.2M516.5 116.4V125.3M517 114.7V123.9M517.5 113.9V121.5M518 107.8V122.8M518.5 112.1V121.5M519 113.1V121.5M519.5 115.5V123.7M520 115.5V123.3M520.5 115.8V124.5M521 115.3V125.3M521.5 115.2V124.2M522 114.7V123M522.5 115.1V122.1M523 113.9V122.6M523.5 114.7V123.4M524 115.2V127.9M524.5 115.6V123M525 117.4V124.5M525.5 116.8V125.9M526 118.3V126.3M526.5 117.6V124.9M527 116.7V126.6M527.5 117.6V128.5M528 118.4V127.9M528.5 118.4V126M529 117.3V124.2M529.5 116.4V125.3M530 117.2V125.2M530.5 115.4V125.9M531 116.2V126.5M531.5 119.1V127.1M532 121.6V129.2M532.5 121.9V128.5M533 123.1V129.9M533.5 122.7V130.2M534 123.3V138.8M534.5 122V133.3M535 121.9V132M535.5 121.1V132.3M536 123.7V133.3M536.5 123V133.5M537 124.9V131.9M537.5 124.2V131.6M538 125.7V133.1M538.5 125.6V135.6M539 124V134M539.5 123.2V135.1M540 123.4V134.3M540.5 122.9V134.8M541 128.3V136.6M541.5 130.3V136.6M542 128.5V135.5M542.5 123.1V136.8M543 130.9V138.2M543.5 130.7V139.1M544 133.6V140.7M544.5 134V140.9M545 132.5V140.5M545.5 132.8V142.5M546 133.5V145.6M546.5 136.5V146.9M547 137.7V144.3M547.5 138.2V145.1M548 137.9V147M548.5 138V145.7M549 137.3V145.8M549.5 139.4V145.8M550 139.7V146M550.5 139.8V149.5M551 140.7V148.7M551.5 142.7V150.5M552 141.6V149.4M552.5 141.5V150.8M553 143.5V151.1M553.5 143.1V157.7M554 142.6V152.1M554.5 144.7V155.7M555 147.7V154.8M555.5 147.3V157.6M556 149.9V159.3M556.5 151.2V158.9M557 152.5V159.6M557.5 154.3V160.8M558 147.7V162.2M558.5 156.7V165.3M559 156V169.9M559.5 155.4V174.6M560 157.7V176.2M560.5 156.2V175.4M561 159.8V177.7M561.5 160V175.2M562 163.1V176.5M562.5 160.5V173.5M563 157V172.5M563.5 159.2V173.7M564 159.5V172.1M564.5 159.3V172.3M565 149.3V174.9M565.5 155.8V174.7M566 156.1V170.5M566.5 154.6V172.6M567 157.8V174.4M567.5 153.5V173.3M568 153.6V168.7M568.5 149.7V166.4M569 152.1V165M569.5 153.2V165M570 152.9V165.9M570.5 151V165.7M571 149V162.7M571.5 127.9V151.5M572 131.4V149.7M572.5 128.5V150.2M573 134V149.4M573.5 135.3V148.7M574 135.5V148.4M574.5 132.9V146.4M575 134.5V145.8M575.5 134.5V145.4M576 134.1V145.3M576.5 132.4V143.5M577 129.3V143.5M577.5 129.1V143.9M578 131.1V140.4M578.5 131V141M579 129.3V143.5M579.5 129.5V141.2M580 132.6V141.1M580.5 132V140.2M581 131.1V139M581.5 131.3V139.6M582 131.5V138.2M582.5 130.8V137.7M583 129.3V136.9M583.5 126.3V136.4M584 125.8V134.9M584.5 123V134M585 126.8V135.2M585.5 128.2V134.5M586 127.5V134.9M586.5 125.9V135.1M587 126.2V135.2M587.5 125.5V133.2M588 119.4V132.4M588.5 125.8V132.5M589 124.9V131.4M589.5 124.4V134.8M590 123.4V134.1M590.5 123.4V134.7M591 123.6V131.5M591.5 123.5V130.9M592 122.2V131.4M592.5 122.7V133.4M593 120.7V130.9M593.5 120.1V127.2M594 120.1V127.4M594.5 117.7V126.5M595 116.9V128.1M595.5 115.9V126.7M596 117.7V126.3M596.5 119.9V128.6M597 118.6V126.6M597.5 119.6V126.5M598 118.1V125.6M598.5 119V126.6M599 119.2V127.3M599.5 118V127.1M600 119.3V126.8M600.5 117.3V127.4M601 114.5V126.5M601.5 115.1V125M602 116.8V125.3M602.5 116.9V124.5M603 118.1V126.3M603.5 117.8V127.4M604 117.4V125.8M604.5 116.6V126.6M605 116.8V125.6M605.5 115.4V125.1M606 114V122.7M606.5 111.6V123.8M607 116.5V126.2M607.5 116.9V125.9M608 116.7V123.1M608.5 115.3V124.3M609 115.2V122.9M609.5 115.8V124.5M610 113.8V125M610.5 113.5V125.4M611 114.7V123.2M611.5 116.1V122.8M612 114.9V125.6M612.5 113.6V125.1M613 113.4V123.3M613.5 114.8V121.2M614 115.5V125.9M614.5 114.9V125.6M615 112.9V125.1M615.5 112.4V121.4M616 114.3V122.6M616.5 113.7V123.1M617 113.9V121.9M617.5 112.8V122.1M618 114V122.4M618.5 113.5V121.1M619 113.4V120.4M619.5 114.3V123.6M620 115.5V121.7M620.5 114.1V124.2M621 115.1V126.3" stroke="#f00084" stroke-width="0.9" fill="none"/>
<path d="M64.3 150V207.6M76.2 158V125M163.3 150V206.5M175.2 158V108.8M262.4 150V211M274.3 158V113.4M361.4 150V210M373.3 158V119M460.5 150V197.4M472.4 158V118M559.5 150V208.6M571.4 158V113.4" stroke="#f00084" stroke-width="1.8" fill="none"/>
<path d="M29 295.9V302.6M29.5 296V303.2M30 294.6V302.9M30.5 295V302.9M31 296.1V301.8M31.5 295.8V301.9M32 295.3V303M32.5 295.6V302.1M33 296.2V301.6M33.5 295.7V302.4M34 295V302.7M34.5 295.1V302.1M35 295.9V302.9M35.5 295.3V302.4M36 294.7V301.8M36.5 295.1V302.1M37 295.2V301.9M37.5 295.7V302.4M38 295.2V303M38.5 296.2V302.4M39 294.7V302M39.5 295.4V302.4M40 295.7V302.8M40.5 296V302.3M41 295.4V302.5M41.5 295.6V302.1M42 295.2V304.1M42.5 294.9V302M43 295.6V301.7M43.5 296.1V302.3M44 295.7V302.1M44.5 294.5V301.8M45 295.8V302.6M45.5 295.7V302.2M46 295.6V302.2M46.5 295.5V302.2M47 295.8V302M47.5 295.6V303M48 295.5V303.3M48.5 296.2V301.9M49 295.8V302.4M49.5 296.1V302.1M50 295.3V301.8M50.5 295.7V301.6M51 295.2V301.8M51.5 295.8V301.7M52 295.6V302.1M52.5 296V301.9M53 296V301.9M53.5 295.7V302M54 295.8V301.9M54.5 296V301.9M55 295.9V302.8M55.5 296V302.1M56 295.8V302.3M56.5 295.2V302.6M57 295.1V302.7M57.5 295.6V302.2M58 295.7V301.7M58.5 295.9V302.6M59 295.6V302.3M59.5 295.7V301.6M60 295.3V301.9M60.5 295.5V302.9M61 295.2V302M61.5 296V302.5M62 296.1V302.4M62.5 295.5V302.9M63 295.8V302.9M63.5 295.3V301.7M64 295V302.8M64.5 223.4V230.9M65 223.9V231.4M65.5 223.5V232.3M66 223V232.8M66.5 222.9V231.9M67 224.1V232.2M67.5 224.8V232M68 224.9V231.9M68.5 224.9V232.2M69 225V232.3M69.5 225V232.2M70 225.2V232.1M70.5 224.4V232.7M71 225V233.8M71.5 225.2V232.7M72 224.8V232.7M72.5 223.9V232.5M73 224.6V232.8M73.5 224.9V232.9M74 225.3V232.9M74.5 225.2V232.6M75 225.4V232.8M75.5 226.3V234.1M76 226.5V234.3M76.5 295.4V301.8M77 295.9V301.9M77.5 294.7V302M78 295.5V302.7M78.5 295.9V302M79 295.8V302.2M79.5 296.1V302.4M80 295.8V303.7M80.5 295.4V302.6M81 296.1V301.6M81.5 295V301.7M82 296.2V301.9M82.5 296V302.4M83 295.5V301.8M83.5 294.6V302M84 293.8V301.9M84.5 295.6V302M85 295.8V303.5M85.5 295.6V302.7M86 295.8V302M86.5 296.1V302.8M87 295.8V302.3M87.5 295.8V302.2M88 295.5V301.8M88.5 295V302.6M89 295.9V301.9M89.5 294.8V302.4M90 295.7V302.7M90.5 296V302.4M91 296V302.3M91.5 296.1V301.9M92 295.3V302.7M92.5 295.8V302.8M93 296.1V301.6M93.5 295.9V301.8M94 294.9V302.1M94.5 295V302.2M95 295.4V302.2M95.5 295.7V301.6M96 295.8V302.3M96.5 295.1V303.9M97 296.1V302.4M97.5 294.9V302.7M98 296V302.5M98.5 295.4V302.3M99 295.7V302.3M99.5 296V301.9M100 295.6V302.4M100.5 296.2V301.6M101 296.2V303.1M101.5 296.2V303.4M102 295.8V301.9M102.5 294.8V303.1M103 294.9V301.6M103.5 296.1V303.3M104 296V302.3M104.5 294.6V302.4M105 295.9V302.9M105.5 295.7V302.4M106 294.9V302.2M106.5 294V302.3M107 294.9V301.6M107.5 295.5V302.5M108 295.6V302.8M108.5 294.7V302.1M109 295.5V302.4M109.5 295.9V302.6M110 295.4V302.4M110.5 295V302.3M111 295.2V301.6M111.5 296.1V301.6M112 295.4V303.5M112.5 296.1V303.1M113 295.9V301.9M113.5 296.2V302.6M114 296V302.2M114.5 295.7V302.4M115 295.1V302.9M115.5 295.6V302.3M116 295.3V301.7M116.5 295.5V301.9M117 295.7V301.8M117.5 295.7V302.1M118 294.9V303.4M118.5 295V302.8M119 295.6V301.8M119.5 294.9V302.3M120 296V302.5M120.5 295.2V302.5M121 295.2V303.3M121.5 295.3V301.8M122 295.6V302.3M122.5 295.5V302.5M123 295V303.3M123.5 294.8V302.2M124 295V301.7M124.5 295.2V301.9M125 295.5V301.8M125.5 296.2V302M126 295V302M126.5 295.5V302.1M127 295.4V301.7M127.5 295.9V301.8M128 295.5V301.6M128.5 295.7V302.2M129 296V302.2M129.5 295.9V302.6M130 295.6V302.9M130.5 295.5V302.8M131 295.5V302.5M131.5 296.2V302M132 296V301.9M132.5 295.5V301.7M133 295.6V302.1M133.5 296.1V302M134 295.5V302.1M134.5 295.6V301.9M135 295.7V301.8M135.5 296V301.9M136 296V302.2M136.5 296.2V301.6M137 296.1V301.9M137.5 296.1V302.2M138 295.3V302M138.5 294.7V302.3M139 295.9V303.1M139.5 296.1V302.7M140 296.2V302.3M140.5 296V301.9M141 296V302.8M141.5 295.7V301.9M142 295.1V303.5M142.5 294.1V302M143 295V302.6M143.5 295.5V302.6M144 296.1V302.1M144.5 296V302.2M145 296.2V302.3M145.5 296.1V303M146 295.9V303M146.5 295.6V301.8M147 296V302.5M147.5 294.8V301.6M148 295V301.8M148.5 296.2V302.1M149 294.8V301.9M149.5 295.2V302.2M150 295.9V301.7M150.5 296.1V301.9M151 295.9V302.3M151.5 296.1V302.5M152 295.4V301.9M152.5 295.3V302.9M153 295.7V303.1M153.5 295.2V302.7M154 294V302.8M154.5 295.5V302.4M155 295.7V302.5M155.5 296.1V301.8M156 295.7V302.7M156.5 296.1V302.9M157 295.2V302.1M157.5 295.7V301.8M158 294.6V302.7M158.5 295.9V302M159 294.4V302.7M159.5 294.8V302.1M160 295.8V302.5M160.5 295.8V301.9M161 296.1V301.9M161.5 295.1V302M162 295.4V301.8M162.5 295.8V302M163 295.9V302.4M163.5 223.6V230.9M164 224.2V232.3M164.5 224.2V231.4M165 223.9V231.8M165.5 224.1V232.7M166 224.1V232.8M166.5 224.7V232.4M167 224.2V232M167.5 224.8V232.1M168 224.6V233.2M168.5 224.3V232.8M169 224.7V232.1M169.5 223.8V232.1M170 224.4V232.4M170.5 225.3V232.7M171 224.2V232.2M171.5 224.3V233.1M172 224.4V232.9M172.5 223.8V232.4M173 222.8V232.4M173.5 224V234.2M174 225.5V234.4M174.5 226.2V233.7M175 226.8V234.9M175.5 295.4V301.7M176 295.2V301.8M176.5 295.4V301.7M177 296V301.9M177.5 295.5V301.7M178 294.6V301.6M178.5 293.2V301.8M179 294.5V301.8M179.5 295.4V302.3M180 295.3V302M180.5 295.9V301.8M181 295.4V301.6M181.5 295.4V302.2M182 295.9V301.8M182.5 295.1V302.3M183 296.2V302M183.5 295.2V302M184 295.4V301.6M184.5 294.8V302.4M185 295.8V302.1M185.5 295.9V302.6M186 296.1V301.7M186.5 295.8V302.8M187 295.7V301.7M187.5 295.4V301.7M188 295.3V301.9M188.5 295.2V301.7M189 295.8V301.8M189.5 295.8V303M190 295.8V303.9M190.5 296.1V303.1M191 295.8V301.8M191.5 295.7V302.1M192 295.5V301.9M192.5 295.2V301.7M193 295.4V302.4M193.5 294.8V301.7M194 294.7V302.3M194.5 296.1V301.9M195 295.2V301.9M195.5 295.4V302.3M196 296V302M196.5 295.3V302.2M197 295.4V301.8M197.5 295.4V302.7M198 294.4V303.6M198.5 295.8V302.9M199 295.4V301.6M199.5 296V302.7M200 295.6V302.6M200.5 296.2V302.2M201 296.1V302.6M201.5 295.3V302.6M202 295.3V301.7M202.5 295.4V302.1M203 294.8V303.1M203.5 295.1V303.7M204 295.4V303.4M204.5 294.3V302.6M205 295.4V301.6M205.5 296.2V302.1M206 295.9V302.2M206.5 295.2V301.7M207 295.3V301.7M207.5 296.1V302.3M208 295.7V302.1M208.5 295.8V302.2M209 294.1V301.7M209.5 295.1V301.6M210 294.7V301.7M210.5 295.5V302M211 295.8V301.9M211.5 296.2V302.1M212 295.5V301.9M212.5 295.5V303.5M213 295.5V301.7M213.5 294.3V303.5M214 295V302.2M214.5 295.5V302.2M215 295.7V302.1M215.5 295.6V301.6M216 295.3V301.7M216.5 295.1V301.6M217 295.1V301.9M217.5 295.7V301.7M218 296.1V302.8M218.5 295.1V304.3M219 295.6V301.6M219.5 295.6V302.8M220 295.6V301.9M220.5 294.9V302.4M221 295.7V303.6M221.5 295.5V302.9M222 295.1V302.1M222.5 294.8V301.8M223 295.3V302.3M223.5 295.4V302.2M224 296.1V302.1M224.5 295.3V301.9M225 295.8V302.3M225.5 296.2V303.2M226 296.2V302.1M226.5 296V302.2M227 296V301.8M227.5 295.9V302.2M228 295V301.8M228.5 295.7V301.8M229 295.4V302M229.5 296V302.3M230 296V302.6M230.5 295.7V302.5M231 296V301.9M231.5 295.2V303.1M232 294.5V302.1M232.5 295.2V302M233 295.7V301.9M233.5 295.8V301.9M234 295.5V302.6M234.5 295.3V302.7M235 295.3V303.3M235.5 296.1V303.3M236 295.2V302.3M236.5 293.4V302.2M237 294.9V303M237.5 295.8V301.8M238 295.8V301.6M238.5 296V302.2M239 295.1V301.7M239.5 295.5V302.1M240 294.9V301.9M240.5 295.7V302.9M241 296V303.2M241.5 295.6V302.6M242 295.9V302.2M242.5 295.8V303.6M243 295.3V302.6M243.5 295.1V303.1M244 295V303.7M244.5 295.7V302.2M245 295.5V301.9M245.5 295.8V302M246 295.8V302.4M246.5 295.3V302.9M247 295.4V303.4M247.5 295.2V302.1M248 295.8V301.7M248.5 295V302M249 294.9V302.1M249.5 295.5V301.7M250 296.2V301.9M250.5 296V301.6M251 295.8V301.9M251.5 296.1V301.8M252 295.8V301.7M252.5 295.4V302.1M253 295.4V302.9M253.5 295.3V302.8M254 295.6V302M254.5 296.1V302.5M255 295.5V303.3M255.5 295.2V302.7M256 295.3V302.4M256.5 295.9V302.3M257 295.9V302.4M257.5 295.9V302.4M258 295.1V302M258.5 294.5V301.7M259 295.6V301.7M259.5 294.9V302.8M260 295.3V302.1M260.5 294.6V302.2M261 295.5V301.9M261.5 295.6V301.9M262 295.2V303.3M262.5 223.8V231.8M263 223.3V233M263.5 224.2V232.6M264 223.5V232.3M264.5 223.7V232.2M265 224.5V232.9M265.5 224V231.9M266 225V233.3M266.5 222.5V232.9M267 222.7V232.8M267.5 224.7V232.5M268 225V232.5M268.5 224.7V233.2M269 225V232.9M269.5 224.2V232.1M270 224.3V232.4M270.5 224.7V232.5M271 225V233.4M271.5 223.9V233.3M272 224.8V232.4M272.5 224.7V233.5M273 225V232.7M273.5 226V233.5M274 226.6V235.1M274.5 294.9V302.5M275 295.4V302.9M275.5 296.1V303.6M276 295.5V301.9M276.5 294.9V303.2M277 295.9V302.2M277.5 295.3V302.3M278 296V301.6M278.5 295.5V302.2M279 295.4V301.8M279.5 295.2V302.1M280 294.6V301.8M280.5 296V301.7M281 295.7V302.3M281.5 294.4V301.9M282 294.3V301.6M282.5 296V302.8M283 295.3V302.3M283.5 295.9V301.7M284 295.7V302.5M284.5 295.3V302.3M285 295.2V302.2M285.5 295.3V302.2M286 295.7V301.9M286.5 296V302.7M287 295.4V304M287.5 294.4V304.3M288 294.9V302.9M288.5 296.1V301.7M289 295.6V301.8M289.5 296V301.7M290 294.2V301.6M290.5 294V302.3M291 295.5V303M291.5 295.5V303.6M292 295.3V302M292.5 295.2V302.9M293 295.5V301.8M293.5 295.1V302.5M294 294.3V301.7M294.5 296V302.8M295 296V302.2M295.5 296.1V301.8M296 296.2V302.4M296.5 296V301.9M297 295.9V303M297.5 295.7V302M298 295.2V302M298.5 295.6V302.5M299 295.3V303.4M299.5 295.4V302.3M300 295.7V302M300.5 294.6V301.6M301 294.8V302.5M301.5 295.7V301.7M302 296.1V302.1M302.5 295.4V302.7M303 296V302.5M303.5 295.4V302.1M304 296.1V302.7M304.5 295.1V302.6M305 295.8V302.5M305.5 296.1V301.8M306 295.3V302.2M306.5 295.3V302.1M307 296.1V302.6M307.5 294.9V301.8M308 295.7V301.7M308.5 295.1V302.4M309 295.8V302.5M309.5 296V302.1M310 295.2V301.8M310.5 295.4V301.6M311 296V302.9M311.5 295.7V302.7M312 296.1V301.9M312.5 296.1V301.8M313 295.4V302.1M313.5 295.6V302.2M314 296.1V301.6M314.5 295.8V302M315 295.4V302.3M315.5 295.5V302.3M316 295.4V303.6M316.5 295.1V302.9M317 296.1V302.2M317.5 295.7V301.8M318 294.5V301.8M318.5 295.5V301.7M319 295.7V301.8M319.5 296V301.6M320 295.9V302M320.5 294.4V302.8M321 294.7V303M321.5 295.8V301.7M322 295.9V302.5M322.5 295.7V302M323 296.1V302.4M323.5 295.8V301.8M324 296.2V301.9M324.5 295.5V301.9M325 295.9V302M325.5 295.5V302.3M326 294.2V302.1M326.5 293.6V302.2M327 294.5V301.6M327.5 295.9V302M328 296V302.1M328.5 295V302.5M329 295.5V303.3M329.5 295.9V301.7M330 296.1V302.5M330.5 295.1V302M331 295.8V302.2M331.5 296V303.1M332 296V302.2M332.5 295.8V302.6M333 296V302.2M333.5 296.2V301.7M334 295.1V301.7M334.5 295.9V302.1M335 295.9V301.8M335.5 296V302.4M336 295.9V302.1M336.5 296V301.7M337 296.2V302.2M337.5 296V302.2M338 295.6V302.7M338.5 295.2V302.3M339 294.7V302.1M339.5 295V302.1M340 295.9V301.9M340.5 296.1V302M341 295.9V302.3M341.5 295V301.9M342 294.8V302.5M342.5 296.1V302.4M343 295.2V302M343.5 296.2V302.5M344 294.9V302M344.5 295.5V301.8M345 295.4V302.4M345.5 294.9V302.3M346 295.2V302.1M346.5 295.8V301.9M347 295.1V302.3M347.5 295.8V302.3M348 296.2V302M348.5 295.2V301.9M349 295.6V302.9M349.5 295.6V302.3M350 295.8V301.6M350.5 295.7V302M351 296.2V302.6M351.5 295.8V302.3M352 295.3V302.1M352.5 295.2V302.5M353 295.2V302.2M353.5 295.9V302.4M354 295.8V302M354.5 295.8V303M355 296.2V303.4M355.5 295.8V301.7M356 295.3V301.7M356.5 296.1V302.1M357 295.8V302.8M357.5 295.4V302.1M358 296V301.8M358.5 295.9V302M359 295.8V301.9M359.5 295.4V302.2M360 294.7V301.8M360.5 295.3V302.4M361 295.2V303.1M361.5 223.4V231.9M362 223V232.4M362.5 222.9V232M363 221.4V232.7M363.5 223.9V232.3M364 224.6V232.6M364.5 224.8V234M365 224.7V232.6M365.5 224.4V232.6M366 224.2V233.1M366.5 223.5V232.5M367 224.1V232.9M367.5 224.7V232.9M368 224.8V232.5M368.5 224.2V233.4M369 224.4V233.6M369.5 225.3V234.1M370 223V234.1M370.5 223.6V234.1M371 224.9V233.3M371.5 224.4V232.3M372 225.5V233.1M372.5 226.2V233.6M373 226.3V234.4M373.5 295.1V302M374 295.2V301.9M374.5 295.4V301.8M375 295.7V301.7M375.5 295.6V301.7M376 295.7V302.1M376.5 295.6V301.9M377 295.2V302.2M377.5 294.6V301.6M378 295.5V301.9M378.5 295.7V302.2M379 294.9V302.1M379.5 295.5V301.7M380 295.8V303M380.5 295.6V301.6M381 295.6V302.3M381.5 295.7V302.5M382 295.3V302.3M382.5 296V301.8M383 296.2V303.3M383.5 296.2V302.3M384 296.1V301.7M384.5 295.5V302M385 295.7V301.8M385.5 295.7V302.3M386 296V302.4M386.5 296V302.2M387 296.1V301.7M387.5 295.9V301.7M388 295.9V301.7M388.5 295.4V302.4M389 295.2V301.8M389.5 295.8V302.7M390 295.7V302.6M390.5 296V302.9M391 296V302.6M391.5 296V301.8M392 295.9V303.5M392.5 296.1V303.6M393 295.9V301.7M393.5 295.8V302.2M394 295.5V302.2M394.5 294.6V302M395 294.1V302.6M395.5 295.1V302.7M396 295.1V302.4M396.5 294.9V302M397 295.4V302.8M397.5 295.5V303.9M398 295.6V302.8M398.5 296.1V301.9M399 295.2V302.7M399.5 294.9V302.1M400 295.4V301.8M400.5 296V301.8M401 294.8V302.4M401.5 295.6V302.2M402 296.1V302.3M402.5 295.9V301.6M403 295.9V302.5M403.5 294.8V302.1M404 294.8V302.1M404.5 294.9V302.3M405 295.2V302.6M405.5 295.9V303.8M406 296V302.9M406.5 296V302M407 296.1V301.7M407.5 295.9V302.8M408 296.1V302.4M408.5 295.7V302.6M409 295.3V302.3M409.5 296V301.7M410 295.9V301.9M410.5 294.8V302.3M411 295.6V301.7M411.5 296.2V301.9M412 296.2V301.8M412.5 295.4V302.4M413 295.8V302.6M413.5 296.2V302M414 295.7V302M414.5 295.5V301.9M415 295.9V301.6M415.5 295.7V302M416 295.8V302.5M416.5 295.8V302M417 296V301.7M417.5 296.2V301.7M418 296V302.2M418.5 295.6V301.6M419 294.8V301.8M419.5 296V301.7M420 296V302M420.5 295.9V301.7M421 295.4V301.8M421.5 295.4V301.9M422 295.8V302M422.5 295V302.3M423 295.1V302.7M423.5 295.1V302.4M424 296.2V303M424.5 295.1V302.2M425 295.6V302M425.5 295.1V302.4M426 295.6V302.4M426.5 296V302.2M427 295.9V301.8M427.5 296.1V302.5M428 295.3V302.3M428.5 295.4V301.9M429 295.7V301.8M429.5 295.1V302.6M430 295.8V302.4M430.5 295.2V301.9M431 295.5V301.8M431.5 296.2V303.4M432 295.8V302.6M432.5 295.5V302.5M433 295.6V302.4M433.5 296.2V301.8M434 296V302.1M434.5 296.1V301.8M435 296.1V302.5M435.5 296V302.4M436 295.3V302.2M436.5 295.7V302.1M437 295.5V302.2M437.5 295.7V302.4M438 296.1V302M438.5 295.7V302.3M439 295.5V302.6M439.5 295.9V301.9M440 295.6V302M440.5 296.2V302M441 295.9V302.2M441.5 296.1V302.6M442 295.2V302.1M442.5 295.2V302.6M443 296V301.8M443.5 295.4V301.7M444 295.3V301.9M444.5 295.4V301.6M445 295.6V301.9M445.5 296.1V301.8M446 296V301.8M446.5 295.6V302.2M447 295.2V301.9M447.5 295.4V301.9M448 295.7V302.1M448.5 295V302.6M449 296.2V301.7M449.5 296.1V301.9M450 295.7V302M450.5 295.7V301.6M451 296V301.6M451.5 295.9V302.1M452 294.8V302.6M452.5 296V302.5M453 295.9V301.9M453.5 295.4V301.9M454 295.6V302.2M454.5 295.3V302.1M455 296V301.7M455.5 295.8V303.2M456 294.7V302.2M456.5 294.9V301.8M457 296.1V302M457.5 295.6V301.7M458 295.6V301.7M458.5 295.7V302M459 296.1V301.9M459.5 295.9V302.2M460 295.7V302M460.5 223.4V231.1M461 223.6V232.6M461.5 222.5V232.5M462 222.5V231.6M462.5 223.9V232.7M463 223.7V232.2M463.5 224.7V231.8M464 225V233.1M464.5 224.8V232.3M465 224.4V233.2M465.5 224.9V232.1M466 224.4V232.6M466.5 224.3V232.7M467 225.2V232.9M467.5 224.5V233.1M468 225.1V232.9M468.5 224.8V233.3M469 224V232.6M469.5 224.7V232.4M470 224.7V232.3M470.5 224.9V233M471 224V232.9M471.5 224.9V235.4M472 226.7V235.1M472.5 295.5V301.9M473 295.9V303.6M473.5 296.1V303.3M474 295.9V302.2M474.5 296.1V302.8M475 295.7V303.6M475.5 295.6V302.1M476 295.5V302M476.5 296V303M477 295.6V302.3M477.5 296V302.3M478 296V302.5M478.5 296.2V301.8M479 295.8V302.7M479.5 295.6V302.4M480 295.9V302.1M480.5 296V301.8M481 295.2V303.3M481.5 295.8V302.2M482 295.3V302.9M482.5 295.8V302.1M483 296.1V302.4M483.5 295.8V301.8M484 295.6V303.1M484.5 295.7V301.8M485 295.1V303M485.5 295.7V302.3M486 296.1V302.7M486.5 295.1V301.8M487 295.5V301.7M487.5 295.8V302.3M488 295.4V303M488.5 294.5V302.4M489 294.9V301.7M489.5 295.5V301.8M490 296.1V301.8M490.5 296.2V302.5M491 295.1V302.4M491.5 295V302.7M492 295.1V302.2M492.5 295.6V301.8M493 295.1V302.9M493.5 295.7V303.4M494 296.2V302.5M494.5 295.2V301.9M495 296V302.5M495.5 295.1V302.1M496 295.8V301.7M496.5 295.9V301.6M497 295.8V302.6M497.5 295.5V302.9M498 296.1V301.7M498.5 296V302.4M499 295.4V301.9M499.5 295.8V302.6M500 295.9V302.8M500.5 295.4V302.9M501 296V303.3M501.5 294.7V303.7M502 295.9V301.8M502.5 295.9V302.1M503 295.3V302.6M503.5 296V303.4M504 295.7V302.7M504.5 295.4V301.8M505 295.2V302.3M505.5 295.9V301.7M506 295.7V302.3M506.5 295.8V302.6M507 295.6V302M507.5 295.6V302.4M508 295.7V302.2M508.5 296V302.2M509 294.7V302.8M509.5 295.9V302.5M510 295.6V301.8M510.5 294.9V301.8M511 295.8V301.8M511.5 295V302.4M512 295.9V302.1M512.5 294V301.8M513 295.7V301.7M513.5 295.9V302.3M514 295.6V302.1M514.5 295.9V302.5M515 295.1V302M515.5 295.8V301.7M516 295.2V302.5M516.5 296.1V302.4M517 294.7V302.5M517.5 296.1V301.8M518 295.3V302.4M518.5 296.2V302.4M519 295.1V302.1M519.5 295.2V301.7M520 295.3V301.7M520.5 295V302.4M521 295.6V302.3M521.5 295V301.9M522 295.5V301.7M522.5 295.4V301.8M523 295.6V302.1M523.5 295.4V302.4M524 296.1V302.5M524.5 295.4V302.8M525 295.9V302.5M525.5 296.1V301.9M526 295.6V303M526.5 295.7V302.4M527 294.7V301.8M527.5 295.7V302.2M528 295.5V303.7M528.5 296.1V303.2M529 295.7V302.1M529.5 296V302.6M530 296.2V302.4M530.5 295.5V301.8M531 295.8V302.2M531.5 294.5V302.9M532 293.8V303M532.5 295V301.9M533 295.1V301.7M533.5 294V302M534 293.9V301.9M534.5 295.9V301.8M535 296V302.9M535.5 295.9V302M536 296V302.1M536.5 296.1V303.4M537 295.9V304.3M537.5 296V302.6M538 295.9V303.2M538.5 296V303.2M539 295.8V302.3M539.5 295.8V302.1M540 295.7V301.7M540.5 296V301.7M541 295.1V302.1M541.5 295.9V302.2M542 296.2V302.2M542.5 294.8V302.2M543 296.1V301.8M543.5 296.1V302.1M544 295.7V301.7M544.5 294.8V301.9M545 294.8V301.7M545.5 296.1V301.8M546 295.7V302.7M546.5 295.9V303.7M547 296.2V303.3M547.5 295.8V303.1M548 296.1V302.5M548.5 295.5V302.1M549 295.5V301.6M549.5 295.5V301.8M550 295.9V302.1M550.5 295.4V301.6M551 295.3V302.5M551.5 295.7V302.6M552 296.2V301.8M552.5 295.7V301.7M553 296.1V301.6M553.5 296.1V301.7M554 296V302.3M554.5 295.8V302.7M555 296V302.5M555.5 295.9V302.2M556 295.8V301.9M556.5 295.4V302.1M557 295.3V301.6M557.5 296V303.4M558 295.7V302.4M558.5 295.9V301.8M559 295.2V301.9M559.5 295.5V303M560 224V233.6M560.5 223.7V232.5M561 224.1V232.4M561.5 224.5V232.2M562 224.2V232.4M562.5 224.6V232M563 224.8V232.7M563.5 224.9V232.6M564 224.6V232.7M564.5 224.7V234.1M565 224.7V232.7M565.5 223.8V232.5M566 225.2V232.8M566.5 224.8V232.7M567 223.6V232.7M567.5 224.7V232.6M568 225.2V232.7M568.5 222.7V232.4M569 223.2V232.3M569.5 224.8V232.3M570 224.6V232.5M570.5 224.9V234.2M571 225.9V234M571.5 295.9V302.4M572 296V302.8M572.5 295.8V303.9M573 295.2V304.5M573.5 295V303.5M574 295.8V302.1M574.5 295.2V301.7M575 294.9V302.7M575.5 295.3V302.8M576 296V302M576.5 296.1V302.5M577 296V302M577.5 295.9V302.6M578 295.7V303.4M578.5 295.8V303.2M579 295.7V301.9M579.5 294.6V302.7M580 294.6V302.9M580.5 295.9V303.2M581 296.1V301.7M581.5 295.3V302.6M582 295.1V301.6M582.5 295.6V301.8M583 295.3V302.9M583.5 295.2V302.5M584 296.1V302M584.5 295V302.5M585 296V301.7M585.5 296V302.8M586 295.5V302.1M586.5 295.9V301.7M587 295.9V302.3M587.5 295.4V301.7M588 295.1V301.8M588.5 296.1V302.4M589 294.5V301.9M589.5 294.6V301.8M590 295.1V301.9M590.5 296.1V301.8M591 296.1V302.1M591.5 294.6V301.9M592 294.7V302.2M592.5 294.8V301.9M593 295.7V302.8M593.5 296V302.4M594 295.1V302.3M594.5 295.9V302M595 294.5V302.2M595.5 294.9V302.1M596 295.9V301.7M596.5 295.8V301.6M597 296V301.7M597.5 296.1V302.4M598 296.2V301.7M598.5 296.2V302.9M599 295.8V301.7M599.5 295.5V301.9M600 295.9V302.7M600.5 296V302.8M601 296.2V301.8M601.5 295.9V301.9M602 296V302.6M602.5 295.5V302.7M603 295.2V302.3M603.5 296V301.9M604 296V302.3M604.5 295.6V302.3M605 296.2V302.8M605.5 296V302.3M606 295.9V301.9M606.5 295.3V301.8M607 295.6V302.3M607.5 296V302.5M608 295.7V301.9M608.5 295.1V302.5M609 295.6V302.1M609.5 295V302.2M610 295.1V301.9M610.5 295.1V302.5M611 294.5V301.6M611.5 296.1V302.2M612 295.2V301.7M612.5 296.2V302.8M613 295.5V302.2M613.5 295.9V302.1M614 295.2V302.5M614.5 295.5V302.8M615 296.1V301.8M615.5 295.3V302.6M616 295.7V301.6M616.5 296.2V301.8M617 296V302.6M617.5 295.9V302M618 296.1V303M618.5 296.1V303.1M619 296V302.1M619.5 295.6V301.8M620 295.7V302.4M620.5 296V301.7M621 295.6V303.1" stroke="#10a8f0" stroke-width="0.9" fill="none"/>
<path d="M64.3 296V230M76.2 303V232M163.3 296V230M175.2 303V232M262.4 296V230M274.3 303V232M361.4 296V230M373.3 303V232M460.5 296V230M472.4 303V232M559.5 296V230M571.4 303V232" stroke="#10a8f0" stroke-width="1.4" stroke-dasharray="2.2 2.2" fill="none" opacity="0.4"/>
<path d="M29 409.1V420.5M29.5 408V420.8M30 409V419.7M30.5 408.6V419.2M31 407.4V419.5M31.5 408.2V419.7M32 408.6V419.3M32.5 408.7V419.7M33 409.9V419.4M33.5 410.2V419.2M34 409.1V419.8M34.5 409.9V420.6M35 409.3V419.4M35.5 410.1V419.2M36 409.1V419.8M36.5 410V419.4M37 408.3V418.8M37.5 408.8V419.6M38 408.1V420.1M38.5 409.2V420.3M39 409.1V419.8M39.5 409.5V419.1M40 408.7V420.7M40.5 408.8V420.5M41 409.9V419.8M41.5 410.2V421.1M42 409.7V419M42.5 409.2V419M43 407.4V420.1M43.5 409.7V419.5M44 409.8V419M44.5 409.5V420.8M45 408.8V421M45.5 409.3V419.5M46 409.5V419.6M46.5 409.9V419.6M47 409.6V420.8M47.5 408.8V420.9M48 407.2V420.3M48.5 408.3V419.4M49 409.6V419.1M49.5 409.3V419.9M50 409.2V419.8M50.5 408.7V421M51 407.7V420.1M51.5 410.2V419.6M52 409.5V419.2M52.5 410V420.4M53 410.1V419.2M53.5 408.4V420.2M54 409.1V420.5M54.5 410.1V418.8M55 409.8V420.5M55.5 410.1V419.9M56 409V422.5M56.5 407.8V421.7M57 409.2V421.2M57.5 409V419.8M58 408.8V419.3M58.5 410V420.6M59 409.1V421.1M59.5 409.7V419.6M60 409.4V419.9M60.5 409.4V419M61 409.9V420.8M61.5 409.3V420M62 408.8V419.6M62.5 409.8V419.4M63 409.7V419.5M63.5 410.1V420.3M64 409.6V419.1M64.5 334.8V344.8M65 335.2V344.9M65.5 336.3V345.3M66 336.7V346.1M66.5 335.8V345.5M67 334.7V345.8M67.5 335.1V347.6M68 335.9V347.6M68.5 337.2V347M69 337.2V349.9M69.5 335.9V347.3M70 337.2V346.2M70.5 336.9V347.5M71 337.1V347.7M71.5 336.2V348.3M72 336.9V347.9M72.5 335.6V347.3M73 336.3V347.7M73.5 337.2V346.5M74 336.3V347M74.5 337.2V346.4M75 335.8V347.9M75.5 337.4V347.7M76 339.4V349.3M76.5 409.7V419.5M77 410V420.1M77.5 409.3V419.5M78 408.3V419.4M78.5 408.6V419.3M79 409.2V420.5M79.5 410V420.1M80 409.7V420M80.5 409.6V419.3M81 408.5V420.8M81.5 409.2V420.8M82 409.1V419.1M82.5 409.4V419.3M83 409.8V420M83.5 409.9V420.2M84 409.9V419.7M84.5 409.7V420.1M85 408.3V419M85.5 409.3V420.7M86 409.8V419.5M86.5 409.2V419.2M87 409.5V419.3M87.5 410.1V418.9M88 409.2V420.2M88.5 408.9V421.4M89 410V420.6M89.5 408.3V421M90 409.4V420.1M90.5 410.1V418.9M91 409.3V418.8M91.5 408.8V419.5M92 409.1V419.9M92.5 409.5V419.6M93 409V421.1M93.5 410V419.1M94 409.3V418.9M94.5 408.8V420.9M95 407.1V418.8M95.5 407.9V420.8M96 408.2V420.7M96.5 409.4V421.1M97 408.8V420.7M97.5 409.5V418.9M98 409.9V420.2M98.5 409.9V420.1M99 409.8V419.4M99.5 410.2V420.7M100 409.7V421.6M100.5 410.2V420.4M101 409.2V419.2M101.5 409.1V419.5M102 409.9V421.1M102.5 409.8V420M103 409.3V419.1M103.5 409.1V419.9M104 409.2V420.2M104.5 410V419M105 408.6V419M105.5 410.1V419.3M106 409.3V419.7M106.5 409.9V419.2M107 408.5V421.5M107.5 408.3V420.5M108 409.8V418.9M108.5 410V420.1M109 409.2V420.6M109.5 408V419M110 409.1V420.6M110.5 409.2V420.5M111 409.2V420.2M111.5 410.2V420.2M112 410.2V420.8M112.5 409V421.3M113 410V419M113.5 409.8V419.8M114 409.2V419.7M114.5 409.3V418.9M115 410.1V419.4M115.5 409.1V420.8M116 408.8V420.5M116.5 408.6V419.3M117 410V419.2M117.5 409.2V421.1M118 409.3V420.1M118.5 409.2V419.1M119 409.2V419.2M119.5 406.4V419.6M120 408.5V421.3M120.5 408.1V419.4M121 410V419.8M121.5 408.4V418.8M122 409.8V420.5M122.5 410.1V421M123 409.2V420M123.5 409.1V419M124 409.6V419.1M124.5 409.6V419.9M125 410V420.1M125.5 410.2V418.9M126 409.4V418.8M126.5 409.6V419.5M127 408.9V419.7M127.5 410.1V419.6M128 410V420.2M128.5 408.7V420.2M129 409.9V419.7M129.5 409.5V419.6M130 409.6V419.3M130.5 408.9V420.1M131 410V419.8M131.5 409.2V419.1M132 410.1V420.4M132.5 410V419.8M133 409.3V419.3M133.5 409.6V419.7M134 409.7V419.5M134.5 409.2V420M135 409.6V419.1M135.5 409.8V419M136 410.2V419.3M136.5 410.2V419.9M137 410V418.9M137.5 409.7V419M138 409.6V419.9M138.5 408.6V419M139 409.7V421.1M139.5 409.5V419.1M140 409.1V419.8M140.5 410V419.5M141 409.5V421.3M141.5 410.1V420.4M142 408.3V420M142.5 409.9V419.6M143 409.4V420.5M143.5 408.9V420.6M144 409.9V419.1M144.5 409.2V420.6M145 408.5V419.1M145.5 407.1V422.5M146 408.1V419.9M146.5 409.3V420.3M147 409.3V419.3M147.5 409.8V419.6M148 409.3V419.3M148.5 409.9V419M149 410V419.3M149.5 410.1V419.9M150 409.2V420M150.5 409.8V419.5M151 408.3V419M151.5 410.2V420.1M152 409.3V420.8M152.5 408.7V419.6M153 408.5V419.8M153.5 409.7V420.4M154 408.5V420.3M154.5 410.1V420M155 407.9V419.7M155.5 409.5V419.4M156 409.4V419M156.5 409.6V418.9M157 409.3V419.3M157.5 410.1V418.9M158 409.9V419M158.5 409.6V422M159 409V420.2M159.5 408.5V419.1M160 409.9V418.9M160.5 409.4V419.3M161 409.2V419.1M161.5 410.1V419.6M162 409.5V419.4M162.5 410.2V419.3M163 410V419.5M163.5 334V346.9M164 334.5V346M164.5 335.9V345.7M165 336.5V345.9M165.5 335.2V345.6M166 335.2V347.3M166.5 336.9V347.5M167 336.1V346.3M167.5 336.3V346.7M168 337.2V346.3M168.5 336.3V346.2M169 336.7V346.4M169.5 337.4V346.4M170 336.2V347.7M170.5 336.4V346.9M171 337.2V346.4M171.5 337.1V347.8M172 337.1V346.4M172.5 337V347.4M173 335.3V348.4M173.5 334V349.3M174 335.4V347.6M174.5 338.1V348.5M175 339.1V349.4M175.5 410.1V419M176 409.1V419.2M176.5 410.1V419.3M177 410.1V419.6M177.5 408.9V419.2M178 410V420.7M178.5 409.5V420.8M179 410.1V421M179.5 408.1V420.1M180 409.1V419M180.5 410V421.3M181 410V421.5M181.5 408.3V419.3M182 408.2V420M182.5 409.9V419.4M183 408.1V419.1M183.5 406.9V419.9M184 408.9V420.3M184.5 409.4V419.8M185 409.6V418.8M185.5 409.5V420.2M186 409.4V420M186.5 409.7V419.5M187 410.2V418.9M187.5 410.1V419.3M188 410.2V419.2M188.5 409.5V419.7M189 409.4V419.4M189.5 408.4V418.9M190 409.9V420.9M190.5 409.3V421.4M191 409.7V420.5M191.5 409.5V419.2M192 409V420.4M192.5 408.2V419.2M193 408.6V419.7M193.5 409.7V418.8M194 409.4V420.3M194.5 407.5V421M195 408.5V421.4M195.5 408.4V421.3M196 410.1V421.9M196.5 408.7V421.8M197 409.5V420.3M197.5 409.6V420.3M198 410.2V420.2M198.5 409V419.1M199 409.2V419.5M199.5 408.4V418.9M200 410V419.7M200.5 408.9V420.2M201 409.7V420.2M201.5 409.5V418.9M202 410V420.2M202.5 409.9V420.4M203 410V419.9M203.5 409.3V419.2M204 409.7V418.9M204.5 409.3V419.7M205 409.6V419.7M205.5 410V420.3M206 409.7V421.3M206.5 409.8V419.3M207 409.3V419.1M207.5 410V420.5M208 408.8V420.1M208.5 409.5V420.4M209 408.6V419.5M209.5 409.6V419.9M210 409.6V419.5M210.5 408.3V420.8M211 410V419.1M211.5 410.1V419.7M212 409V419.6M212.5 409.3V419.7M213 409.5V419M213.5 408.7V419.1M214 407.6V419M214.5 407.4V419.6M215 408.3V419.9M215.5 409.8V418.9M216 407.7V418.8M216.5 410.2V420.1M217 409.6V420.8M217.5 407.9V419.9M218 409.7V419.8M218.5 409.7V421M219 409.2V420.1M219.5 409.9V418.9M220 408.1V418.9M220.5 408V419.9M221 409.5V418.9M221.5 409.9V420.5M222 409.3V420.5M222.5 410V419.4M223 410.1V420.2M223.5 410.1V419.7M224 409.8V419.9M224.5 409.9V419.2M225 409.4V419.1M225.5 409.3V419M226 409.6V419.5M226.5 408.1V420M227 408.7V419.1M227.5 410.2V419.8M228 409.5V419.7M228.5 409.3V419.1M229 409.6V419.8M229.5 408.9V419.3M230 407.6V418.8M230.5 407.2V419.9M231 410V419.2M231.5 407.8V420.3M232 408.3V419.3M232.5 409.3V419M233 409.4V419.3M233.5 409.3V419.5M234 409.2V421.6M234.5 408V422.3M235 409.9V420M235.5 408.2V419.4M236 409V419.9M236.5 410.2V420.5M237 409.6V419.7M237.5 409.4V419.5M238 409V419.1M238.5 407.8V420.7M239 408.7V420M239.5 410V419.4M240 409.7V419.3M240.5 408.9V420M241 408.3V420.1M241.5 410.1V419.8M242 410.1V419.5M242.5 409.4V419M243 409.8V419.3M243.5 409.1V419.4M244 410.1V419.7M244.5 409.9V419.4M245 408.5V419.5M245.5 409.4V421M246 409V420.1M246.5 409.2V419.3M247 408.4V421.2M247.5 408.9V420.3M248 409.5V420.1M248.5 410V419.2M249 410V420.1M249.5 410.2V419.2M250 409.9V419.4M250.5 409.4V419.3M251 409.5V419.1M251.5 408.6V419.2M252 408.8V418.8M252.5 408.3V419.3M253 409.2V420.1M253.5 408.4V419.9M254 408.7V420.2M254.5 409.3V419.3M255 409.8V418.8M255.5 409.6V418.8M256 408V420.1M256.5 408.2V419.8M257 409.9V420.5M257.5 409.8V420.7M258 409.6V419M258.5 409.3V419.8M259 410.2V420.6M259.5 410.1V420.5M260 409.8V419.4M260.5 409.2V419.2M261 409V419.5M261.5 409.7V418.9M262 408.7V420.3M262.5 335.1V345.3M263 335.6V344.9M263.5 335.5V345.3M264 333.7V345.9M264.5 335V345.5M265 336.3V346.4M265.5 336V346.1M266 337V347.4M266.5 336.1V348.5M267 335.5V348M267.5 336.8V346.2M268 337V346.2M268.5 334.8V346.4M269 335.1V346.2M269.5 336.6V347.4M270 335.5V348.4M270.5 335.9V347.9M271 336.4V347.1M271.5 335.8V347.7M272 337V348.6M272.5 337.6V347.7M273 337.7V347M273.5 338.6V347.9M274 339.1V348.6M274.5 409.5V420.2M275 410.2V420.3M275.5 408.4V419.1M276 407.6V419.5M276.5 409.8V420.8M277 409.9V421M277.5 409.6V419M278 410V419.3M278.5 408.7V419M279 407.7V421.2M279.5 409.1V419.7M280 410V419.3M280.5 407.9V419.2M281 406.2V420.9M281.5 408.1V420M282 409.9V419.1M282.5 409.7V419M283 409.7V419.7M283.5 409.7V419.8M284 410V420.8M284.5 409.5V419.3M285 409.6V419.6M285.5 409.5V419.5M286 408.9V418.8M286.5 409V419.5M287 410V420.7M287.5 409.4V418.9M288 409V419.3M288.5 408.7V421M289 409.4V420.9M289.5 409.5V420.9M290 410V419.1M290.5 409.2V420.8M291 409.2V420.3M291.5 409.4V421.3M292 409.2V420.6M292.5 409.2V419.8M293 409.3V418.9M293.5 409V419.5M294 409.1V419.4M294.5 409.6V419.3M295 409.1V419.4M295.5 407.9V419.3M296 409.8V420.6M296.5 408.2V419.4M297 409.5V420.3M297.5 410V419.7M298 409.7V420.2M298.5 408.2V419.5M299 408.7V420M299.5 409.2V419.5M300 410.1V420.1M300.5 409.2V419.6M301 408.2V420M301.5 408.5V419.9M302 409.3V420.3M302.5 409.5V420.4M303 409.9V420.4M303.5 409.9V419.3M304 409.5V418.9M304.5 408.6V419.1M305 408.2V420.8M305.5 410V422M306 406.7V419.7M306.5 408.4V419.4M307 409.1V419.1M307.5 410.1V420.7M308 409.6V420.9M308.5 409.5V419.9M309 409.9V419.4M309.5 409.4V420.2M310 409.6V418.8M310.5 410.1V419.9M311 409.4V419.5M311.5 409.7V420.1M312 409.1V420M312.5 409.1V419.9M313 409.5V420.7M313.5 408.9V419.1M314 410.2V420.2M314.5 409.2V420M315 409.9V419.3M315.5 410V418.8M316 410.1V419.2M316.5 409.5V420M317 410.1V420.5M317.5 408.9V419.8M318 409V419.1M318.5 409.1V420.4M319 409V420.5M319.5 406.5V420M320 408.1V419.8M320.5 410.1V420.3M321 409.1V419.2M321.5 410.1V420.5M322 409.1V420.3M322.5 409.6V421.5M323 409.8V420.9M323.5 408.7V419.8M324 408.5V419.9M324.5 407.7V418.9M325 407.3V419.1M325.5 408.8V419.1M326 409.9V419.6M326.5 409.8V421M327 408.7V420.2M327.5 408.4V419.7M328 408.6V419.4M328.5 409.1V419.1M329 409.4V420.1M329.5 408.5V419.5M330 409.3V419M330.5 409V419.2M331 409.8V419.2M331.5 408.2V419M332 410.1V419.9M332.5 410V420.1M333 410.2V419.3M333.5 408.5V419.6M334 408.6V419.8M334.5 408.8V419M335 409.2V421M335.5 410.1V419.9M336 409.3V419.6M336.5 409.3V418.9M337 410V418.8M337.5 410.1V420.1M338 409.6V420.5M338.5 408.7V419.6M339 409.9V418.9M339.5 409.2V420.3M340 409.9V420.2M340.5 409.9V419.1M341 410V420.3M341.5 409.2V418.9M342 409.8V420.6M342.5 409V420.4M343 409.4V418.9M343.5 408.8V420.2M344 408.5V421.9M344.5 409.2V419.6M345 409.4V421.1M345.5 409.9V419.4M346 409.4V420M346.5 409.8V419.5M347 409.7V420M347.5 408.8V419.1M348 408.5V419.7M348.5 408.8V418.8M349 408.5V419.5M349.5 409.8V419.5M350 410V419.8M350.5 409.8V418.9M351 410V419.6M351.5 409.5V419.6M352 407.9V418.9M352.5 408.3V419M353 410V419.5M353.5 409.5V419.2M354 408.5V419.6M354.5 407.7V419.2M355 409.4V420.1M355.5 409.2V421.5M356 409.8V421.6M356.5 408.3V419.9M357 409.7V419.9M357.5 409V420.4M358 409.2V420.7M358.5 410.2V419.3M359 409.2V419M359.5 409.9V419.6M360 409.3V419.3M360.5 409.8V419.4M361 409.9V419.2M361.5 334.9V345M362 333.8V346.9M362.5 333.1V347.8M363 334.3V346.4M363.5 335.9V345.6M364 336.2V347.8M364.5 333.8V349.1M365 333.2V347.7M365.5 335.2V346.8M366 335.1V346M366.5 335.7V346.6M367 336.9V348.4M367.5 335.7V347.3M368 336.3V346.2M368.5 336.1V346.7M369 336.9V346.6M369.5 336.4V346.3M370 336.8V346.5M370.5 337.5V346.9M371 337.3V346.6M371.5 336.1V346.8M372 336.9V347M372.5 338.2V348.3M373 338.4V349M373.5 408.5V419.7M374 408.8V419.2M374.5 410V421.9M375 409V421.4M375.5 409.6V419.4M376 409.6V419.5M376.5 410.2V419.9M377 410.2V420.2M377.5 410.1V420.1M378 408.6V420M378.5 408.5V421.2M379 409.8V422M379.5 409.9V419.1M380 409.2V420M380.5 409.7V419.1M381 408.6V420.6M381.5 410V421.4M382 409.7V419.9M382.5 409.6V419.8M383 410.1V419.3M383.5 408.9V420.2M384 410.2V419.7M384.5 410V420.1M385 409.9V419.8M385.5 409.7V418.8M386 409.1V419.1M386.5 408.7V419.2M387 408.8V419.4M387.5 408.9V420.2M388 409.7V420.9M388.5 408.9V420.2M389 409.7V419.7M389.5 408.4V419.6M390 408.3V419.4M390.5 409.8V419.8M391 407.4V419.2M391.5 407.7V419.2M392 409.5V419.3M392.5 410.1V420.6M393 410V420M393.5 409.7V419.1M394 410.1V419.9M394.5 409V419.5M395 410V419.3M395.5 409.6V419M396 409.5V419.5M396.5 409V419.9M397 409.9V420.2M397.5 409.6V419M398 408.8V419M398.5 409V420.2M399 409.5V419.5M399.5 409V418.9M400 409.7V419M400.5 409.4V419.2M401 409.8V420.4M401.5 409.8V420.4M402 409.5V419.5M402.5 409.1V419.3M403 409.5V419.3M403.5 409.6V419.9M404 409.2V419M404.5 409.1V420.7M405 408.4V419.6M405.5 409.1V420.2M406 410.1V419.1M406.5 409.3V419.5M407 410.1V421.2M407.5 408.6V420.8M408 408.9V420.6M408.5 409V418.9M409 409.3V420M409.5 409.4V420.1M410 410V420.1M410.5 409.5V420M411 409.5V420.3M411.5 409.9V420.1M412 409.1V420.8M412.5 409.9V419.5M413 408.8V419.6M413.5 409.2V418.8M414 408.6V419.1M414.5 408.2V419.6M415 408.7V420.8M415.5 410.2V420.3M416 408.3V420.5M416.5 409.4V420.2M417 409.6V419.5M417.5 410.2V420.4M418 410V419.6M418.5 409.5V419.3M419 409.7V419.2M419.5 409.3V419M420 410.1V418.9M420.5 409.7V419.2M421 409.4V418.9M421.5 409.4V420.2M422 409.8V419.6M422.5 409.5V419.5M423 408.8V419M423.5 409.8V421.2M424 410V420.8M424.5 410.1V419.5M425 409.7V420.7M425.5 409.1V420.7M426 407.1V419.5M426.5 409.1V420.4M427 409.8V421.3M427.5 409.4V420.7M428 408.9V419.5M428.5 409.6V419.2M429 410.1V419.7M429.5 409.9V420.4M430 410V420.3M430.5 409.4V419.4M431 410V420.3M431.5 408.7V418.9M432 409.7V418.9M432.5 409.1V419.2M433 409.1V419.3M433.5 410V418.8M434 409V419.3M434.5 407.2V420.1M435 410V419.4M435.5 407.2V420M436 408V420.2M436.5 409.8V419.1M437 409V419.9M437.5 409.6V418.9M438 409.8V419.9M438.5 409.9V420.3M439 409.7V419.1M439.5 409.3V419.1M440 409.1V420.1M440.5 409V420M441 410.2V420.7M441.5 409.9V420.8M442 409.3V419.3M442.5 409.6V420.3M443 409.9V419.6M443.5 409.4V419.1M444 409.2V419.2M444.5 409.6V419.6M445 409.3V420.6M445.5 408.7V421M446 409.8V420.8M446.5 410.2V419.4M447 409.1V419.8M447.5 409V419M448 409.9V419.5M448.5 409.4V419.4M449 409.2V419.6M449.5 410.1V419.1M450 408.7V419.7M450.5 408.8V421.2M451 408.9V419.1M451.5 409.2V420.6M452 410.1V419.3M452.5 409.7V419.4M453 409.4V419.3M453.5 409.3V420M454 410V419.2M454.5 410V419.4M455 410.2V419.7M455.5 409.6V420.1M456 409.7V419.9M456.5 409V420.4M457 408.4V420.3M457.5 408.6V419.1M458 407.6V419.3M458.5 408.7V419.9M459 409.3V419.7M459.5 408.1V420.2M460 408.2V419.4M460.5 335.5V344.5M461 335.5V345.8M461.5 335.7V345.3M462 335.7V345.5M462.5 336.3V346.1M463 336.8V346.6M463.5 335.9V345.9M464 336.5V345.9M464.5 336.4V347.8M465 335.9V346.4M465.5 335.8V347.7M466 336.1V346.4M466.5 337.4V346.6M467 336V348.2M467.5 334.7V346.7M468 335.5V347.7M468.5 336V348.2M469 336.5V346.4M469.5 334.7V348.3M470 333.4V347.9M470.5 333.5V346.3M471 334.8V346.5M471.5 337.8V348.4M472 337.9V348.4M472.5 409.1V421.1M473 409.8V421.7M473.5 409.6V419.7M474 410.2V420.8M474.5 409.3V419.6M475 409.4V421M475.5 409.7V421.9M476 408.5V419.4M476.5 409.1V420M477 408.8V419.4M477.5 410.1V419.3M478 408.3V419M478.5 409.1V419.1M479 409.7V418.8M479.5 408.6V419.3M480 410.2V420.4M480.5 407.9V419.1M481 409.9V418.9M481.5 408.1V419.2M482 409V419.6M482.5 408.2V419.6M483 407.8V419.9M483.5 408.5V419.4M484 410V420M484.5 409.6V420M485 409.1V418.9M485.5 409.8V420M486 408V419M486.5 408.9V420.1M487 406.8V419.8M487.5 409V419M488 409.7V419.4M488.5 410.1V419.6M489 409.9V419.9M489.5 408V419.6M490 408.2V419.5M490.5 409V420M491 408.5V418.8M491.5 409V420.1M492 408.4V419.1M492.5 409.8V418.8M493 410.1V419.1M493.5 409.1V419.6M494 409.3V420M494.5 409.5V420.8M495 409.9V420.7M495.5 410V420.6M496 410.1V421.2M496.5 410.1V422M497 409.8V421.1M497.5 409.7V418.8M498 410.1V419.9M498.5 409.7V419.6M499 409.8V419.5M499.5 408.8V418.9M500 409.5V419.4M500.5 408.5V419.5M501 409.7V419.6M501.5 409.9V418.9M502 409.4V419M502.5 410.1V419.1M503 410.1V418.9M503.5 409.4V419.7M504 408.6V420.3M504.5 408.2V419.2M505 408.4V418.8M505.5 409.7V419.9M506 409.8V420.5M506.5 408.1V420.7M507 409.4V419.9M507.5 408.8V419M508 410V420.8M508.5 407.4V420.6M509 409V420.3M509.5 409.8V421.1M510 409.3V419.3M510.5 407.4V420.2M511 407.8V419.3M511.5 410V418.9M512 409.6V419.8M512.5 409.6V420.7M513 409.7V419.1M513.5 410.1V420.1M514 409.7V419.1M514.5 409.8V419.3M515 410.1V419.5M515.5 409.6V419.3M516 408.9V419.5M516.5 410.1V419.2M517 410V421M517.5 409.3V420.2M518 410.1V420M518.5 409.2V419.4M519 409.8V420.3M519.5 409.5V419.1M520 410.1V422.2M520.5 407.4V419.8M521 408.8V420.6M521.5 408.2V419.7M522 408.2V420.4M522.5 408.7V419.2M523 408.3V419.1M523.5 408.1V419.2M524 409.9V421.2M524.5 408.8V421.9M525 408.3V420.1M525.5 408.3V419.2M526 410V419.1M526.5 409.7V419.3M527 409.8V418.8M527.5 409.3V419.7M528 408.9V420.6M528.5 410.2V419.5M529 408.3V420.7M529.5 409.8V419.4M530 409.5V419.8M530.5 409.9V419.9M531 410V421.6M531.5 409.4V419.8M532 409.5V419M532.5 409.8V419.9M533 409.2V419.4M533.5 408.6V419.9M534 408.4V420.4M534.5 410.1V419.4M535 407.5V419.3M535.5 408.5V420.4M536 408.7V419.9M536.5 407.6V419.6M537 407.8V420.3M537.5 409.6V419.4M538 408.6V420.4M538.5 408V419.9M539 407.5V419.4M539.5 408.4V419.8M540 409.1V419.1M540.5 409.9V419.5M541 409.7V420.1M541.5 409.1V420.7M542 410.1V419.8M542.5 410.1V421.1M543 409.9V419.7M543.5 408V419.8M544 407.7V419.2M544.5 410V420.7M545 409.4V420.4M545.5 409.1V420.4M546 408.7V419.7M546.5 410.1V419.1M547 409.5V420.3M547.5 409.9V420.6M548 410V422.1M548.5 409.2V420.8M549 409.8V419.1M549.5 408.5V419.4M550 408.6V418.9M550.5 409.4V419.6M551 410.1V419.1M551.5 410.1V419M552 409.9V419M552.5 408.4V420.4M553 408.5V419.1M553.5 410V421.5M554 409V420.5M554.5 410.2V419.4M555 409.3V419.4M555.5 409.8V418.9M556 408.9V418.8M556.5 407.6V420.2M557 408.3V420.6M557.5 408.4V419.3M558 409.3V419.9M558.5 409.1V421.7M559 410.1V422.6M559.5 408.2V421.2M560 334V345.1M560.5 334.8V345.3M561 335.6V346.3M561.5 336.5V347.4M562 336.6V348.6M562.5 336.7V348.9M563 336.2V346.7M563.5 334.6V347.1M564 336.3V347.1M564.5 337.3V346.1M565 337.1V346.3M565.5 336.2V347M566 337.4V347.2M566.5 336V348.2M567 337.2V346.7M567.5 337.2V347.9M568 337.5V347.5M568.5 336.4V347.4M569 337V346.3M569.5 335.1V346.9M570 336.7V346.4M570.5 337.4V347.6M571 337.1V347.9M571.5 409.3V419.4M572 409.9V419.4M572.5 410V420.1M573 410V419.4M573.5 409.9V419M574 408.4V420M574.5 408.5V419M575 410.1V419.3M575.5 409.4V420.7M576 410.2V421.5M576.5 409.8V419.1M577 409.5V418.9M577.5 409.7V419.2M578 409.8V421.1M578.5 409.5V419.8M579 409.9V419.1M579.5 408.7V419M580 408.9V419.8M580.5 409.8V419.7M581 409.2V418.9M581.5 409.7V419.4M582 409.6V420M582.5 409.1V418.9M583 409V419.3M583.5 410.2V420.2M584 409.5V422.1M584.5 408.5V421.1M585 407.8V419.7M585.5 410.1V418.9M586 408.8V419.1M586.5 410.1V420.7M587 409V421M587.5 409.5V419.8M588 409.2V418.9M588.5 407.2V419M589 407.5V420M589.5 409.1V419.9M590 408.9V419.3M590.5 409.3V419.2M591 408.5V420.6M591.5 407.5V419.4M592 408.2V421.3M592.5 409.6V419.9M593 410.1V420.1M593.5 409V419.2M594 408.3V419.4M594.5 407.6V420.7M595 408.3V420.7M595.5 408.9V420.2M596 406.5V420.3M596.5 408.8V418.8M597 408.9V418.9M597.5 409.5V419.7M598 409.7V418.9M598.5 409.5V418.9M599 410.2V419.1M599.5 410.2V418.8M600 409.5V419.8M600.5 408.5V419.7M601 408.8V419.7M601.5 409.3V419M602 407.9V418.8M602.5 408.8V419.8M603 409.6V420.6M603.5 409.5V420.7M604 409.4V420.3M604.5 407.4V419M605 409V419.9M605.5 409.6V419.1M606 410.1V419.9M606.5 409.5V421.3M607 408.4V420M607.5 410.1V420.1M608 409.6V419M608.5 409.5V419.4M609 408.7V419M609.5 409.2V419.1M610 409.4V418.9M610.5 410V419.3M611 409.6V418.8M611.5 408.9V419.1M612 410.1V420.1M612.5 409.6V419.9M613 409.5V419M613.5 409V419M614 409V419.1M614.5 408.6V419.4M615 408V419.1M615.5 409V420.5M616 409.1V420.1M616.5 408.6V418.8M617 410.1V419M617.5 409.7V419.2M618 408.4V420.1M618.5 409.8V419.1M619 409.7V420.7M619.5 408.3V419.1M620 409.1V419.2M620.5 408.5V419.4M621 408.3V419" stroke="#14f046" stroke-width="0.9" fill="none"/>
<path d="M64.6 423V345M76.2 430V346M163.7 423V345M175.2 430V346M262.7 423V345M274.3 430V346M361.8 423V345M373.3 430V346M460.8 423V345M472.4 430V346M559.8 423V345M571.4 430V346" stroke="#0a6a1e" stroke-width="1.1" fill="none"/>
<polygon points="366,2 380,2 373,9.5" fill="#a8621e"/>
<g font-weight="bold" font-size="14" fill="#fff">
<text x="46" y="32">PVin = 12 V</text>
<text x="46" y="49.5">Vout = 1.2 V</text>
<text x="46" y="67">Iout = 36 A</text>
</g>
<rect x="3" y="118.5" width="25" height="17.5" fill="#ff10a0"/>
<path d="M11.8 126.5l2.2-2V134" stroke="#000" stroke-width="1.8" fill="none"/>
<path d="M19.5 127.5H25M23 125l3.5 2.5l-3.5 2.5z" stroke="#000" stroke-width="1.2" fill="#000"/>
<text x="10" y="305" font-size="14" fill="#10a8f0">2</text>
<path d="M19.5 298.5H25M23 296l3.5 2.5l-3.5 2.5z" stroke="#10a8f0" stroke-width="1.2" fill="#10a8f0"/>
<text x="10" y="423" font-size="14" fill="#14f046">4</text>
<path d="M19.5 416.8H25M23 414.3l3.5 2.5l-3.5 2.5z" stroke="#14f046" stroke-width="1.2" fill="#14f046"/>
<path d="M620.5 260.2H610" stroke="#10a8f0" stroke-width="2" fill="none"/><path d="M612 255.6L606 260.2L612 264.8z" fill="#10a8f0"/>
<text x="201.5" y="109.7" font-size="13.5" fill="#dc0074" stroke="#dc0074" stroke-width="0.2" textLength="26" lengthAdjust="spacingAndGlyphs">Vout</text>
<text x="188.5" y="290.5" font-size="13" fill="#1ea2f0" stroke="#1ea2f0" stroke-width="0.1" textLength="57" lengthAdjust="spacingAndGlyphs">Master PH</text>
<text x="185.5" y="409.4" font-size="13.5" fill="#1ed448" stroke="#1ed448" stroke-width="0.2" textLength="54" lengthAdjust="spacingAndGlyphs">Slave1 PH</text>
<text x="28" y="492.5" font-size="14" fill="#d8007c" stroke="#d8007c" stroke-width="0.15" textLength="22" lengthAdjust="spacingAndGlyphs">Ch1</text>
<text x="78" y="492.5" font-size="14" fill="#d8007c" stroke="#d8007c" stroke-width="0.15" textLength="42" lengthAdjust="spacingAndGlyphs">10.0mV</text>
<text x="206.5" y="492.5" font-size="14" fill="#1a8ee0" stroke="#1a8ee0" stroke-width="0.15" textLength="22.5" lengthAdjust="spacingAndGlyphs">Ch2</text>
<text x="255.5" y="492.5" font-size="14" fill="#1a8ee0" stroke="#1a8ee0" stroke-width="0.15" textLength="31.5" lengthAdjust="spacingAndGlyphs">10.0V</text>
<text x="206.5" y="506.5" font-size="14" fill="#12c236" stroke="#12c236" stroke-width="0.15" textLength="22.5" lengthAdjust="spacingAndGlyphs">Ch4</text>
<text x="255.5" y="506.5" font-size="14" fill="#12c236" stroke="#12c236" stroke-width="0.15" textLength="31.5" lengthAdjust="spacingAndGlyphs">10.0V</text>
<text x="384" y="492.5" font-size="14" fill="#c8c8c8" stroke="#c8c8c8" stroke-width="0.15" textLength="101" lengthAdjust="spacingAndGlyphs">M 2.0µs 1.25GS/s</text>
<text x="504.5" y="492.5" font-size="14" fill="#c8c8c8" stroke="#c8c8c8" stroke-width="0.15" textLength="63" lengthAdjust="spacingAndGlyphs">IT 200ps/pt</text>
<text x="384" y="506.5" font-size="14" fill="#c8c8c8" stroke="#c8c8c8" stroke-width="0.15">A</text>
<text x="398.5" y="506.5" font-size="14" fill="#1a8ee0" stroke="#1a8ee0" stroke-width="0.15" textLength="22.5" lengthAdjust="spacingAndGlyphs">Ch2</text>
<text x="445" y="506.5" font-size="14" fill="#c8c8c8" stroke="#c8c8c8" stroke-width="0.15" textLength="27" lengthAdjust="spacingAndGlyphs">6.4V</text>
<path d="M129.5 483.5q-1 3 1.5 4.5q2.5 1.5 1.5 4.5" stroke="#d8007c" stroke-width="1.4" fill="none"/>
<text x="145.5" y="489.5" font-size="10" font-weight="bold" fill="#d8007c" textLength="7" lengthAdjust="spacingAndGlyphs">B</text><text x="152.5" y="492.5" font-size="11" fill="#d8007c" stroke="#d8007c" stroke-width="0.3" textLength="9" lengthAdjust="spacingAndGlyphs">w</text>
<text x="323" y="489.5" font-size="10" font-weight="bold" fill="#1a8ee0" textLength="7" lengthAdjust="spacingAndGlyphs">B</text><text x="330.5" y="492.5" font-size="11" fill="#1a8ee0" stroke="#1a8ee0" stroke-width="0.3" textLength="9" lengthAdjust="spacingAndGlyphs">w</text>
<path d="M432 498l5 7" stroke="#c8c8c8" stroke-width="1.3" fill="none"/>
</svg>
</body></html>
